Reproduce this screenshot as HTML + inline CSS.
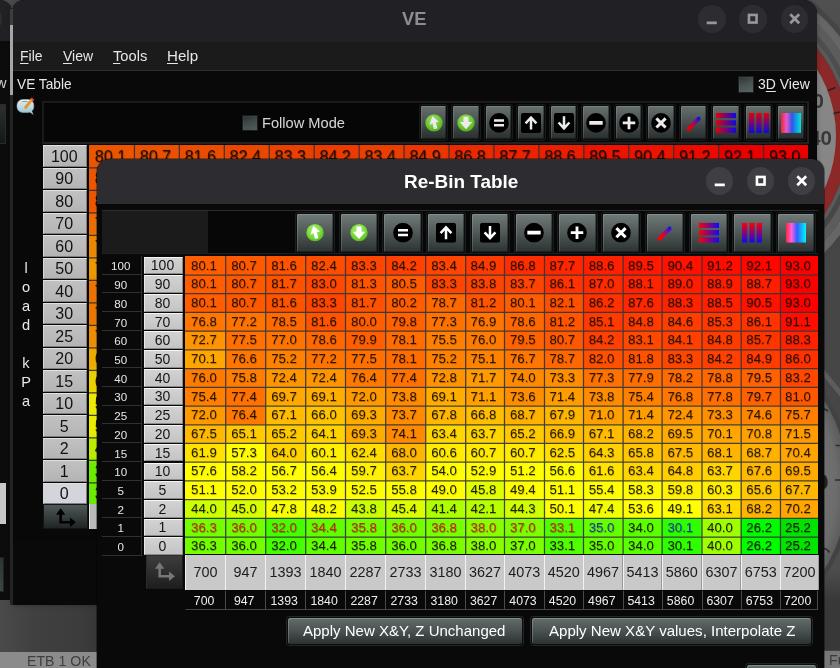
<!DOCTYPE html><html><head><meta charset="utf-8"><title>VE</title><style>
*{box-sizing:border-box;margin:0;padding:0}
html,body{width:840px;height:668px;overflow:hidden;background:#4a4a4a;font-family:"Liberation Sans","DejaVu Sans",sans-serif;}
body{position:relative}
div,span,svg{position:absolute}
u{text-decoration:underline;text-underline-offset:2.2px;text-decoration-thickness:1.1px}
.t{white-space:nowrap;transform-origin:0 0}
#ve{will-change:transform;top:0;height:604.5px;background:#090909;border-radius:12px 14px 0 0;overflow:hidden;box-shadow:0 0 5px 0 rgba(0,0,0,.28)}
#rb{will-change:transform;left:97px;top:159px;width:726.8px;height:521px;background:#090909;border-radius:13px 13px 0 0;overflow:hidden;box-shadow:0 0 0 1px rgba(0,0,0,.35)}
.tbar{left:0;top:0;width:100%;}
#ve .tbar{height:41.7px;background:#212125}
#rb .tbar{height:44.9px;background:#2c2c31}
.wb{width:27.5px;height:27.5px;border-radius:50%}
#ve .wb{top:5.2px;background:#2d2d31;color:#98989a}
.wb svg{left:0;top:0;width:27.5px;height:27.5px}
#rb .wb{top:8.4px;background:#3e3e43;color:#fff}
.menu{left:0;top:41.7px;width:100%;height:29.8px;background:#1b1b1c;border-bottom:1px solid #303030}
.lbl{font-size:14.6px;color:#e8e8e8;line-height:19px;white-space:nowrap}
.vl{width:14px;text-align:center}
.chk{width:16px;height:16.5px;background:linear-gradient(160deg,#2a3030 0%,#465050 45%,#5a6463 100%);border:1px solid #1c2020;box-shadow:inset 1px 1px 0 rgba(255,255,255,.06)}
.panel{background:#070707;border:2px solid #1d1d1d;border-right-color:#242424;border-bottom-color:#242424}
.panel2{background:#070707;border-top:1px solid #2c2c2c;border-bottom:1px solid #202020}
.panel2 .pl{left:0;top:0;width:106px;height:100%;background:#1b1b1b}
.tb{background:linear-gradient(180deg,#707a79 0%,#505958 48%,#2c3232 100%);border:1px solid #0c0e0e;border-radius:2px;box-shadow:inset 1px 1px 0 rgba(255,255,255,.15), inset -1px -1px 0 rgba(0,0,0,.35), 0 0 0 1px #1a1d1d}
.tb span{left:50%;top:50%;transform:translate(-50%,-51.5%)}
.tb.sm span{transform:translate(-50%,-45.5%)}
.tb svg{left:0;top:0;width:100%;height:100%}
.ybin{background:linear-gradient(180deg,#d2d2d2,#c4c4c4);color:#141414;text-align:center;font-size:14px;border-top:1.5px solid #f6f6f6;border-left:1px solid #eaeaea;border-bottom:1.5px solid #8a8a8a;border-right:1px solid #8a8a8a;display:flex;align-items:center;justify-content:center;padding-right:2px}
.ybin.big{font-size:16px;padding-top:2px;padding-right:1px}
.ybin.sel{background:#e6e6ee}
.ylab{color:#e6e6e6;font-size:11.6px;display:flex;align-items:center;justify-content:center;border-bottom:1px solid #303030;border-right:1px solid #303030;padding-top:2px;padding-right:1px}
.heat{overflow:hidden}
.cv{display:flex;align-items:center;justify-content:center;font-size:13.2px;color:rgba(24,14,4,.92);text-shadow:0.4px 0.6px 0.7px rgba(0,0,0,.3);padding-right:2.4px;padding-bottom:0.6px;white-space:nowrap}
.cv.big{font-size:16.1px;padding-top:1.6px;padding-right:1px;text-shadow:0.7px 0.9px 0.9px rgba(0,0,0,.5)}
.cv.red{color:#c8241a;text-shadow:0.6px 0.8px 0.8px rgba(80,40,0,.45)}
.cv.blue{color:#1c3c9c;text-shadow:0.6px 0.8px 0.8px rgba(0,40,80,.4)}
.xbin{background:#c9c9c9;color:#1c1c1c;font-size:14.4px;display:flex;align-items:center;justify-content:center;border-left:1.5px solid #f2f2f2;border-right:1px solid #9a9a9a;white-space:nowrap;overflow:hidden}
.xlab{color:#eee;font-size:12.3px;display:flex;align-items:center;justify-content:center;border-left:1px solid #4a4a4a;border-bottom:1px solid #444;white-space:nowrap;padding-top:2.4px;padding-right:3px}
.abtn{background:linear-gradient(180deg,#566160 0%,#3c4544 50%,#232828 100%);border:1px solid #151818;display:flex;align-items:center;justify-content:center}
.abtn svg{position:static}
.abtn.dis{background:linear-gradient(180deg,#3c3c3c 0%,#2e2e2e 50%,#1e1e1e 100%);border:1px solid #2c2c2c;border-bottom-color:#1a1a1a;border-right-color:#1a1a1a}
.btn{background:linear-gradient(180deg,#687271 0%,#5e6867 8%,#4a5352 48%,#2c3131 100%);border:1px solid #0c0e0e;border-radius:3px;box-shadow:inset 1px 1px 0 rgba(255,255,255,.2), 0 0 0 1px #222626}

.dim{left:0;top:101px;width:100%;height:440px;background:rgba(0,0,0,.08)}

</style></head><body>
<div id="bg" style="left:0;top:0;width:840px;height:668px;will-change:transform">
<svg style="left:800px;top:0" width="40" height="668" viewBox="800 0 40 668">
<defs><linearGradient id="rs" gradientUnits="userSpaceOnUse" x1="0" y1="0" x2="0" y2="668"><stop offset="0" stop-color="#505050"/><stop offset="0.34" stop-color="#464646"/><stop offset="0.6" stop-color="#464646"/><stop offset="0.85" stop-color="#4e4e4e"/><stop offset="0.9" stop-color="#383838"/><stop offset="1" stop-color="#383838"/></linearGradient>
<radialGradient id="lf" gradientUnits="userSpaceOnUse" cx="684" cy="485" r="164"><stop offset="0.8" stop-color="#747474"/><stop offset="0.93" stop-color="#6c6c6c"/><stop offset="1" stop-color="#5c5c5c"/></radialGradient></defs>
<rect x="800" y="0" width="40" height="668" fill="url(#rs)"/>
<circle cx="709" cy="136" r="167" fill="none" stroke="#454545" stroke-width="4.500"/>
<circle cx="709" cy="136" r="160" fill="none" stroke="#666" stroke-width="8"/><circle cx="709" cy="136" r="152" fill="none" stroke="#5c5c5c" stroke-width="8"/>
<path d="M822 371l20 24" stroke="#5c5c5c" stroke-width="5"/>
<circle cx="684" cy="485" r="168.500" fill="#424242"/>
<circle cx="684" cy="485" r="164" fill="url(#lf)"/>
<circle cx="709" cy="136" r="143" fill="#5a5a5a"/>
<circle cx="709" cy="136" r="139.500" fill="#444"/>
<circle cx="709" cy="136" r="139" fill="#8c2828"/>
<circle cx="709" cy="136" r="127" fill="#868686"/><path d="M828 90.500l7.500-3M833.500 113.500l6.500-1.500" stroke="#2a2020" stroke-width="1.600"/>
<text x="812.600" y="107.500" font-size="20.500" font-weight="bold" fill="#383838" font-family="Liberation Sans, sans-serif">0</text>
<text x="809.200" y="145.300" font-size="20.500" font-weight="bold" fill="#383838" font-family="Liberation Sans, sans-serif">40</text>
<path d="M835.500 445.500h4.500M835 480h5M823.500 408.500l4.500 2.500M824 548.500q3.500 0.500 5.500 4" stroke="#2c2c2c" stroke-width="1.700" fill="none"/>
<ellipse cx="823.700" cy="482" rx="4" ry="7.200" fill="#222"/>
<rect x="824" y="650.800" width="16" height="18" fill="#787878"/>
<text x="829" y="665.300" font-size="14.200" fill="#3a3a3a" font-family="Liberation Sans, sans-serif">Fu</text>
</svg>
<div style="left:-120px;top:0;width:131.5px;height:620px;background:#0c0c0c;border-radius:12px 12px 0 0;overflow:hidden"><div style="left:0;top:0;width:100%;height:41.3px;background:#212125"></div><div style="left:94px;top:5px;width:27.5px;height:27.5px;border-radius:50%;background:#2d2d31"></div></div>
<div class="t" style="left:-4px;top:74.6px;color:#d0d0d0;font-size:14.6px;line-height:17.5px">w</div>
<div style="left:-2px;top:103.5px;width:8px;height:40px;background:linear-gradient(180deg,#2a3030,#151818);border:1px solid #2a2a2a"></div>
<div style="left:0;top:483px;width:5.5px;height:41px;background:#c8c8c8"></div>
<div style="left:-2px;top:557px;width:5.5px;height:35px;background:linear-gradient(180deg,#2a3434,#3a4646);border:1px solid #222"></div>
<div style="left:0;top:600px;width:100px;height:52px;background:linear-gradient(90deg,#4a4a4a 0%,#404040 35%,#3c3c3c 80%,#363636 100%)"></div>
<div style="left:0;top:651.6px;width:100px;height:17px;background:#8b8b8b"></div>
</div>

<div class="t" style="left:26.56px;top:652.76px;font-size:14.2px;line-height:17.04px;color:#3e3e3e;transform:scaleX(0.9996);">ETB 1 OK</div>
<div id="ve" style="left:12px;width:804.6px">
<div class="tbar"></div>
<div class="wb" style="left:686.15px"><svg viewBox="0 0 27.5 27.5"><path d="M8.700 17.900H18.800" stroke="currentColor" stroke-width="2.800" fill="none"/></svg></div>
<div class="wb" style="left:727.35px"><svg viewBox="0 0 27.5 27.5"><rect x="9.950" y="9.950" width="7.600" height="7.600" stroke="currentColor" stroke-width="2.600" fill="none"/></svg></div>
<div class="wb" style="left:768.55px"><svg viewBox="0 0 27.5 27.5"><path d="M9.300 9.300L18.200 18.200M18.200 9.300L9.300 18.200" stroke="currentColor" stroke-width="2.700" fill="none"/></svg></div>
<div class="t" style="left:390.41px;top:8.00px;font-size:18.6px;line-height:22.32px;color:#8e8e90;font-weight:bold;transform:scaleX(0.9836);">VE</div>
<div class="menu"></div>
<div class="t" style="left:8.13px;top:48.23px;font-size:14.6px;line-height:17.52px;color:#e6e6e6;transform:scaleX(0.9571);"><u>F</u>ile</div>
<div class="t" style="left:50.93px;top:48.23px;font-size:14.6px;line-height:17.52px;color:#e6e6e6;transform:scaleX(0.9579);"><u>V</u>iew</div>
<div class="t" style="left:100.96px;top:48.23px;font-size:14.6px;line-height:17.52px;color:#e6e6e6;transform:scaleX(1.0064);"><u>T</u>ools</div>
<div class="t" style="left:155.04px;top:48.23px;font-size:14.6px;line-height:17.52px;color:#e6e6e6;transform:scaleX(1.0354);"><u>H</u>elp</div>
<div class="t" style="left:4.93px;top:75.88px;font-size:14.6px;line-height:17.52px;color:#e8e8e8;transform:scaleX(0.9399);">VE Table</div>
<div class="chk" style="left:725.5px;top:76.3px"></div>
<div class="t" style="left:746.19px;top:75.88px;font-size:14.6px;line-height:17.52px;color:#e8e8e8;transform:scaleX(0.9565);">3<u>D</u> View</div>
<svg style="left:3px;top:95.8px" width="22" height="22" viewBox="0 0 22 22"><defs><linearGradient id="nb" x1="0" y1="0" x2="0" y2="1"><stop offset="0" stop-color="#f2fafc"/><stop offset="0.55" stop-color="#d6eef6"/><stop offset="1" stop-color="#a8d6e6"/></linearGradient></defs><path d="M14.200 15.800L18.600 18.900L16.600 14.200Z" fill="#b4dcea"/><rect x="2" y="3.500" width="16.800" height="13" rx="5.800" ry="5.600" fill="url(#nb)" stroke="#9cc4d2" stroke-width=".5"/><path d="M7.200 5.400H12.600" stroke="#98a4a8" stroke-width="1"/><path d="M10 12.400L17.200 3.200" stroke="#f0a636" stroke-width="2.900"/><path d="M8.600 14.100L8.900 11.500L11.200 13.200Z" fill="#e8d2b0"/><path d="M16.600 1.400L19.400 3.700L18.200 5.200L15.400 2.900Z" fill="#e8384c"/></svg>

<div class="panel" style="left:30px;top:101px;width:766.6px;height:42.5px"></div>
<div class="chk" style="left:230px;top:114.7px"></div>
<div class="t" style="left:250.13px;top:114.88px;font-size:14.6px;line-height:17.52px;color:#e8e8e8;transform:scaleX(1.0030);">Follow Mode</div>
<div class="tb sm" style="left:407.9px;top:104.6px;width:27.3px;height:35.6px"><span style="width:20px;height:20px"><svg viewBox="0 0 24 24"><defs><radialGradient id="gg" cx="45%" cy="35%" r="65%"><stop offset="0" stop-color="#b4f080"/><stop offset="0.6" stop-color="#7cdc3c"/><stop offset="1" stop-color="#58bc22"/></radialGradient></defs><circle cx="12" cy="12" r="10.4" fill="url(#gg)"/><path d="M10 3.600L18 11L14 11.200L16.200 18.400L12 19.600L10.200 12.400L6.600 14.600Z" fill="#fff"/></svg></span></div><div class="tb sm" style="left:440.4px;top:104.6px;width:27.3px;height:35.6px"><span style="width:20px;height:20px"><svg viewBox="0 0 24 24"><circle cx="12" cy="12" r="10.4" fill="url(#gg)"/><path d="M9 4.500H15V11H19.500L12 19.500L4.500 11H9Z" fill="#fff"/></svg></span></div><div class="tb sm" style="left:472.9px;top:104.6px;width:27.3px;height:35.6px"><span style="width:20px;height:20px"><svg viewBox="0 0 24 24"><circle cx="12" cy="12" r="11.8" fill="#000"/><path d="M6 9.200H18M6 14.800H18" stroke="#fff" stroke-width="3"/></svg></span></div><div class="tb sm" style="left:505.4px;top:104.6px;width:27.3px;height:35.6px"><span style="width:20px;height:20px"><svg viewBox="0 0 24 24"><rect x="0" y="0" width="24" height="24" rx="3" fill="#000"/><path d="M12 20V5.500M5.500 12.500L12 5.500L18.500 12.500" stroke="#fff" stroke-width="3" fill="none"/></svg></span></div><div class="tb sm" style="left:537.9px;top:104.6px;width:27.3px;height:35.6px"><span style="width:20px;height:20px"><svg viewBox="0 0 24 24"><rect x="0" y="0" width="24" height="24" rx="3" fill="#000"/><path d="M12 4V18.500M5.500 11.500L12 18.500L18.500 11.500" stroke="#fff" stroke-width="3" fill="none"/></svg></span></div><div class="tb sm" style="left:570.4px;top:104.6px;width:27.3px;height:35.6px"><span style="width:20px;height:20px"><svg viewBox="0 0 24 24"><circle cx="12" cy="12" r="11.800" fill="#000"/><path d="M4 12H20" stroke="#fff" stroke-width="4.400"/></svg></span></div><div class="tb sm" style="left:602.9px;top:104.6px;width:27.3px;height:35.6px"><span style="width:20px;height:20px"><svg viewBox="0 0 24 24"><circle cx="12" cy="12" r="11.800" fill="#000"/><path d="M4.500 12H19.500M12 4.500V19.500" stroke="#fff" stroke-width="3.400"/></svg></span></div><div class="tb sm" style="left:635.4px;top:104.6px;width:27.3px;height:35.6px"><span style="width:20px;height:20px"><svg viewBox="0 0 24 24"><circle cx="12" cy="12" r="11.800" fill="#000"/><path d="M6.500 6.500L17.500 17.500M17.500 6.500L6.500 17.500" stroke="#fff" stroke-width="3.600"/></svg></span></div><div class="tb sm" style="left:667.9px;top:104.6px;width:27.3px;height:35.6px"><span style="width:20px;height:20px"><svg viewBox="0 0 24 24"><defs><linearGradient id="pg" gradientUnits="userSpaceOnUse" x1="5" y1="19" x2="19" y2="5"><stop offset="0" stop-color="#ff0000"/><stop offset="0.35" stop-color="#e00030"/><stop offset="0.6" stop-color="#8010a0"/><stop offset="1" stop-color="#0a10ff"/></linearGradient></defs><path d="M5.800 18.800L16.800 7.800" stroke="url(#pg)" stroke-width="4.800" stroke-linecap="square"/><path d="M15.600 5.600L19.600 4.600L18.600 8.600Z" fill="#1010f0"/></svg></span></div><div class="tb sm" style="left:700.4px;top:104.6px;width:27.3px;height:35.6px"><span style="width:20px;height:20px"><svg viewBox="0 0 24 24"><defs><linearGradient id="hg" gradientUnits="userSpaceOnUse" x1="0" y1="0" x2="24" y2="0"><stop offset="0" stop-color="#ff0000"/><stop offset="1" stop-color="#0a0aff"/></linearGradient></defs><rect x="0" y="0" width="24" height="6.300" fill="url(#hg)"/><rect x="0" y="8.850" width="24" height="6.300" fill="url(#hg)"/><rect x="0" y="17.700" width="24" height="6.300" fill="url(#hg)"/></svg></span></div><div class="tb sm" style="left:732.9px;top:104.6px;width:27.3px;height:35.6px"><span style="width:20px;height:20px"><svg viewBox="0 0 24 24"><defs><linearGradient id="vg" gradientUnits="userSpaceOnUse" x1="0" y1="0" x2="0" y2="24"><stop offset="0" stop-color="#ff0000"/><stop offset="1" stop-color="#0a0aff"/></linearGradient></defs><rect x="0" y="0" width="6.300" height="24" fill="url(#vg)"/><rect x="8.850" y="0" width="6.300" height="24" fill="url(#vg)"/><rect x="17.700" y="0" width="6.300" height="24" fill="url(#vg)"/></svg></span></div><div class="tb sm" style="left:765.4px;top:104.6px;width:27.3px;height:35.6px"><span style="width:20px;height:20px"><svg viewBox="0 0 24 24"><defs><linearGradient id="cg" x1="0" y1="0" x2="1" y2="0"><stop offset="0" stop-color="#ff2a3a"/><stop offset="0.28" stop-color="#ff60e0"/><stop offset="0.55" stop-color="#3060ff"/><stop offset="1" stop-color="#00f8f0"/></linearGradient></defs><rect x="0" y="0" width="24" height="24" fill="url(#cg)"/></svg></span></div>
<div class="ybin big" style="left:30.75px;top:145.30px;width:44px;height:21.30px">100</div>
<div class="ybin big" style="left:30.75px;top:167.80px;width:44px;height:21.30px">90</div>
<div class="ybin big" style="left:30.75px;top:190.30px;width:44px;height:21.30px">80</div>
<div class="ybin big" style="left:30.75px;top:212.80px;width:44px;height:21.30px">70</div>
<div class="ybin big" style="left:30.75px;top:235.30px;width:44px;height:21.30px">60</div>
<div class="ybin big" style="left:30.75px;top:257.80px;width:44px;height:21.30px">50</div>
<div class="ybin big" style="left:30.75px;top:280.30px;width:44px;height:21.30px">40</div>
<div class="ybin big" style="left:30.75px;top:302.80px;width:44px;height:21.30px">30</div>
<div class="ybin big" style="left:30.75px;top:325.30px;width:44px;height:21.30px">25</div>
<div class="ybin big" style="left:30.75px;top:347.80px;width:44px;height:21.30px">20</div>
<div class="ybin big" style="left:30.75px;top:370.30px;width:44px;height:21.30px">15</div>
<div class="ybin big" style="left:30.75px;top:392.80px;width:44px;height:21.30px">10</div>
<div class="ybin big" style="left:30.75px;top:415.30px;width:44px;height:21.30px">5</div>
<div class="ybin big" style="left:30.75px;top:437.80px;width:44px;height:21.30px">2</div>
<div class="ybin big" style="left:30.75px;top:460.30px;width:44px;height:21.30px">1</div>
<div class="ybin big sel" style="left:30.75px;top:482.80px;width:44px;height:21.30px">0</div>
<svg class="heat" style="left:76.50px;top:144.50px" width="719.04" height="360.00" viewBox="0 0 719.04 360.00"><defs><filter id="vb" x="-5%" y="-5%" width="110%" height="110%"><feGaussianBlur stdDeviation="2.2"/></filter></defs><g filter="url(#vb)"><rect x="-10.00" y="-10.00" width="55.44" height="33.00" fill="#ff5d00"/><rect x="44.94" y="-10.00" width="45.44" height="33.00" fill="#ff5900"/><rect x="89.88" y="-10.00" width="45.44" height="33.00" fill="#ff5300"/><rect x="134.82" y="-10.00" width="45.44" height="33.00" fill="#ff4d00"/><rect x="179.76" y="-10.00" width="45.44" height="33.00" fill="#ff4600"/><rect x="224.70" y="-10.00" width="45.44" height="33.00" fill="#ff4000"/><rect x="269.64" y="-10.00" width="45.44" height="33.00" fill="#ff4500"/><rect x="314.58" y="-10.00" width="45.44" height="33.00" fill="#ff3b00"/><rect x="359.52" y="-10.00" width="45.44" height="33.00" fill="#ff2d00"/><rect x="404.46" y="-10.00" width="45.44" height="33.00" fill="#ff2600"/><rect x="449.40" y="-10.00" width="45.44" height="33.00" fill="#ff2000"/><rect x="494.34" y="-10.00" width="45.44" height="33.00" fill="#ff1900"/><rect x="539.28" y="-10.00" width="45.44" height="33.00" fill="#ff1200"/><rect x="584.22" y="-10.00" width="45.44" height="33.00" fill="#ff0d00"/><rect x="629.16" y="-10.00" width="45.44" height="33.00" fill="#ff0600"/><rect x="674.10" y="-10.00" width="55.44" height="33.00" fill="#ff0000"/><rect x="-10.00" y="22.50" width="55.44" height="23.00" fill="#ff5d00"/><rect x="44.94" y="22.50" width="45.44" height="23.00" fill="#ff5900"/><rect x="89.88" y="22.50" width="45.44" height="23.00" fill="#ff5200"/><rect x="134.82" y="22.50" width="45.44" height="23.00" fill="#ff4800"/><rect x="179.76" y="22.50" width="45.44" height="23.00" fill="#ff5500"/><rect x="224.70" y="22.50" width="45.44" height="23.00" fill="#ff5b00"/><rect x="269.64" y="22.50" width="45.44" height="23.00" fill="#ff4600"/><rect x="314.58" y="22.50" width="45.44" height="23.00" fill="#ff4300"/><rect x="359.52" y="22.50" width="45.44" height="23.00" fill="#ff4300"/><rect x="404.46" y="22.50" width="45.44" height="23.00" fill="#ff3200"/><rect x="449.40" y="22.50" width="45.44" height="23.00" fill="#ff2b00"/><rect x="494.34" y="22.50" width="45.44" height="23.00" fill="#ff2300"/><rect x="539.28" y="22.50" width="45.44" height="23.00" fill="#ff1d00"/><rect x="584.22" y="22.50" width="45.44" height="23.00" fill="#ff1d00"/><rect x="629.16" y="22.50" width="45.44" height="23.00" fill="#ff1f00"/><rect x="674.10" y="22.50" width="55.44" height="23.00" fill="#ff0000"/><rect x="-10.00" y="45.00" width="55.44" height="23.00" fill="#ff5d00"/><rect x="44.94" y="45.00" width="45.44" height="23.00" fill="#ff5900"/><rect x="89.88" y="45.00" width="45.44" height="23.00" fill="#ff5300"/><rect x="134.82" y="45.00" width="45.44" height="23.00" fill="#ff4600"/><rect x="179.76" y="45.00" width="45.44" height="23.00" fill="#ff5200"/><rect x="224.70" y="45.00" width="45.44" height="23.00" fill="#ff5d00"/><rect x="269.64" y="45.00" width="45.44" height="23.00" fill="#ff6800"/><rect x="314.58" y="45.00" width="45.44" height="23.00" fill="#ff5500"/><rect x="359.52" y="45.00" width="45.44" height="23.00" fill="#ff5d00"/><rect x="404.46" y="45.00" width="45.44" height="23.00" fill="#ff4f00"/><rect x="449.40" y="45.00" width="45.44" height="23.00" fill="#ff3100"/><rect x="494.34" y="45.00" width="45.44" height="23.00" fill="#ff2700"/><rect x="539.28" y="45.00" width="45.44" height="23.00" fill="#ff2200"/><rect x="584.22" y="45.00" width="45.44" height="23.00" fill="#ff2000"/><rect x="629.16" y="45.00" width="45.44" height="23.00" fill="#ff1200"/><rect x="674.10" y="45.00" width="55.44" height="23.00" fill="#ff0000"/><rect x="-10.00" y="67.50" width="55.44" height="23.00" fill="#ff7600"/><rect x="44.94" y="67.50" width="45.44" height="23.00" fill="#ff7300"/><rect x="89.88" y="67.50" width="45.44" height="23.00" fill="#ff6900"/><rect x="134.82" y="67.50" width="45.44" height="23.00" fill="#ff5300"/><rect x="179.76" y="67.50" width="45.44" height="23.00" fill="#ff5e00"/><rect x="224.70" y="67.50" width="45.44" height="23.00" fill="#ff6000"/><rect x="269.64" y="67.50" width="45.44" height="23.00" fill="#ff7200"/><rect x="314.58" y="67.50" width="45.44" height="23.00" fill="#ff7500"/><rect x="359.52" y="67.50" width="45.44" height="23.00" fill="#ff6800"/><rect x="404.46" y="67.50" width="45.44" height="23.00" fill="#ff5500"/><rect x="449.40" y="67.50" width="45.44" height="23.00" fill="#ff3900"/><rect x="494.34" y="67.50" width="45.44" height="23.00" fill="#ff3b00"/><rect x="539.28" y="67.50" width="45.44" height="23.00" fill="#ff3d00"/><rect x="584.22" y="67.50" width="45.44" height="23.00" fill="#ff3800"/><rect x="629.16" y="67.50" width="45.44" height="23.00" fill="#ff3200"/><rect x="674.10" y="67.50" width="55.44" height="23.00" fill="#ff0d00"/><rect x="-10.00" y="90.00" width="55.44" height="23.00" fill="#ff9300"/><rect x="44.94" y="90.00" width="45.44" height="23.00" fill="#ff7000"/><rect x="89.88" y="90.00" width="45.44" height="23.00" fill="#ff7400"/><rect x="134.82" y="90.00" width="45.44" height="23.00" fill="#ff6800"/><rect x="179.76" y="90.00" width="45.44" height="23.00" fill="#ff5f00"/><rect x="224.70" y="90.00" width="45.44" height="23.00" fill="#ff6c00"/><rect x="269.64" y="90.00" width="45.44" height="23.00" fill="#ff7f00"/><rect x="314.58" y="90.00" width="45.44" height="23.00" fill="#ff7b00"/><rect x="359.52" y="90.00" width="45.44" height="23.00" fill="#ff6200"/><rect x="404.46" y="90.00" width="45.44" height="23.00" fill="#ff5900"/><rect x="449.40" y="90.00" width="45.44" height="23.00" fill="#ff4000"/><rect x="494.34" y="90.00" width="45.44" height="23.00" fill="#ff4800"/><rect x="539.28" y="90.00" width="45.44" height="23.00" fill="#ff4000"/><rect x="584.22" y="90.00" width="45.44" height="23.00" fill="#ff3b00"/><rect x="629.16" y="90.00" width="45.44" height="23.00" fill="#ff3500"/><rect x="674.10" y="90.00" width="55.44" height="23.00" fill="#ff2200"/><rect x="-10.00" y="112.50" width="55.44" height="23.00" fill="#ffa600"/><rect x="44.94" y="112.50" width="45.44" height="23.00" fill="#ff7700"/><rect x="89.88" y="112.50" width="45.44" height="23.00" fill="#ff8100"/><rect x="134.82" y="112.50" width="45.44" height="23.00" fill="#ff7300"/><rect x="179.76" y="112.50" width="45.44" height="23.00" fill="#ff7000"/><rect x="224.70" y="112.50" width="45.44" height="23.00" fill="#ff6c00"/><rect x="269.64" y="112.50" width="45.44" height="23.00" fill="#ff8100"/><rect x="314.58" y="112.50" width="45.44" height="23.00" fill="#ff8200"/><rect x="359.52" y="112.50" width="45.44" height="23.00" fill="#ff7600"/><rect x="404.46" y="112.50" width="45.44" height="23.00" fill="#ff6800"/><rect x="449.40" y="112.50" width="45.44" height="23.00" fill="#ff5000"/><rect x="494.34" y="112.50" width="45.44" height="23.00" fill="#ff5100"/><rect x="539.28" y="112.50" width="45.44" height="23.00" fill="#ff4600"/><rect x="584.22" y="112.50" width="45.44" height="23.00" fill="#ff4000"/><rect x="629.16" y="112.50" width="45.44" height="23.00" fill="#ff3b00"/><rect x="674.10" y="112.50" width="55.44" height="23.00" fill="#ff3200"/><rect x="-10.00" y="135.00" width="55.44" height="23.00" fill="#ff7b00"/><rect x="44.94" y="135.00" width="45.44" height="23.00" fill="#ff7d00"/><rect x="89.88" y="135.00" width="45.44" height="23.00" fill="#ff9600"/><rect x="134.82" y="135.00" width="45.44" height="23.00" fill="#ff9600"/><rect x="179.76" y="135.00" width="45.44" height="23.00" fill="#ff7800"/><rect x="224.70" y="135.00" width="45.44" height="23.00" fill="#ff7100"/><rect x="269.64" y="135.00" width="45.44" height="23.00" fill="#ff9300"/><rect x="314.58" y="135.00" width="45.44" height="23.00" fill="#ff9b00"/><rect x="359.52" y="135.00" width="45.44" height="23.00" fill="#ff8a00"/><rect x="404.46" y="135.00" width="45.44" height="23.00" fill="#ff8f00"/><rect x="449.40" y="135.00" width="45.44" height="23.00" fill="#ff7200"/><rect x="494.34" y="135.00" width="45.44" height="23.00" fill="#ff6e00"/><rect x="539.28" y="135.00" width="45.44" height="23.00" fill="#ff6b00"/><rect x="584.22" y="135.00" width="45.44" height="23.00" fill="#ff6700"/><rect x="629.16" y="135.00" width="45.44" height="23.00" fill="#ff6200"/><rect x="674.10" y="135.00" width="55.44" height="23.00" fill="#ff4700"/><rect x="-10.00" y="157.50" width="55.44" height="23.00" fill="#ff8000"/><rect x="44.94" y="157.50" width="45.44" height="23.00" fill="#ff7100"/><rect x="89.88" y="157.50" width="45.44" height="23.00" fill="#ffa900"/><rect x="134.82" y="157.50" width="45.44" height="23.00" fill="#ffae00"/><rect x="179.76" y="157.50" width="45.44" height="23.00" fill="#ff9900"/><rect x="224.70" y="157.50" width="45.44" height="23.00" fill="#ff8b00"/><rect x="269.64" y="157.50" width="45.44" height="23.00" fill="#ffae00"/><rect x="314.58" y="157.50" width="45.44" height="23.00" fill="#ff9f00"/><rect x="359.52" y="157.50" width="45.44" height="23.00" fill="#ff8d00"/><rect x="404.46" y="157.50" width="45.44" height="23.00" fill="#ff9d00"/><rect x="449.40" y="157.50" width="45.44" height="23.00" fill="#ff8b00"/><rect x="494.34" y="157.50" width="45.44" height="23.00" fill="#ff8000"/><rect x="539.28" y="157.50" width="45.44" height="23.00" fill="#ff7600"/><rect x="584.22" y="157.50" width="45.44" height="23.00" fill="#ff6e00"/><rect x="629.16" y="157.50" width="45.44" height="23.00" fill="#ff6000"/><rect x="674.10" y="157.50" width="55.44" height="23.00" fill="#ff5700"/><rect x="-10.00" y="180.00" width="55.44" height="23.00" fill="#ff9900"/><rect x="44.94" y="180.00" width="45.44" height="23.00" fill="#ff7800"/><rect x="89.88" y="180.00" width="45.44" height="23.00" fill="#ffbc00"/><rect x="134.82" y="180.00" width="45.44" height="23.00" fill="#ffc400"/><rect x="179.76" y="180.00" width="45.44" height="23.00" fill="#ffac00"/><rect x="224.70" y="180.00" width="45.44" height="23.00" fill="#ff8c00"/><rect x="269.64" y="180.00" width="45.44" height="23.00" fill="#ffb700"/><rect x="314.58" y="180.00" width="45.44" height="23.00" fill="#ffbe00"/><rect x="359.52" y="180.00" width="45.44" height="23.00" fill="#ffb100"/><rect x="404.46" y="180.00" width="45.44" height="23.00" fill="#ffb600"/><rect x="449.40" y="180.00" width="45.44" height="23.00" fill="#ffa000"/><rect x="494.34" y="180.00" width="45.44" height="23.00" fill="#ff9d00"/><rect x="539.28" y="180.00" width="45.44" height="23.00" fill="#ff9600"/><rect x="584.22" y="180.00" width="45.44" height="23.00" fill="#ff8f00"/><rect x="629.16" y="180.00" width="45.44" height="23.00" fill="#ff8600"/><rect x="674.10" y="180.00" width="55.44" height="23.00" fill="#ff7e00"/><rect x="-10.00" y="202.50" width="55.44" height="23.00" fill="#ffb900"/><rect x="44.94" y="202.50" width="45.44" height="23.00" fill="#ffcb00"/><rect x="89.88" y="202.50" width="45.44" height="23.00" fill="#ffca00"/><rect x="134.82" y="202.50" width="45.44" height="23.00" fill="#ffd200"/><rect x="179.76" y="202.50" width="45.44" height="23.00" fill="#ffac00"/><rect x="224.70" y="202.50" width="45.44" height="23.00" fill="#ff8900"/><rect x="269.64" y="202.50" width="45.44" height="23.00" fill="#ffd700"/><rect x="314.58" y="202.50" width="45.44" height="23.00" fill="#ffd500"/><rect x="359.52" y="202.50" width="45.44" height="23.00" fill="#ffca00"/><rect x="404.46" y="202.50" width="45.44" height="23.00" fill="#ffbe00"/><rect x="449.40" y="202.50" width="45.44" height="23.00" fill="#ffbc00"/><rect x="494.34" y="202.50" width="45.44" height="23.00" fill="#ffb400"/><rect x="539.28" y="202.50" width="45.44" height="23.00" fill="#ffab00"/><rect x="584.22" y="202.50" width="45.44" height="23.00" fill="#ffa600"/><rect x="629.16" y="202.50" width="45.44" height="23.00" fill="#ffa100"/><rect x="674.10" y="202.50" width="55.44" height="23.00" fill="#ff9c00"/><rect x="-10.00" y="225.00" width="55.44" height="23.00" fill="#ffe200"/><rect x="44.94" y="225.00" width="45.44" height="23.00" fill="#ffff00"/><rect x="89.88" y="225.00" width="45.44" height="23.00" fill="#ffd300"/><rect x="134.82" y="225.00" width="45.44" height="23.00" fill="#ffef00"/><rect x="179.76" y="225.00" width="45.44" height="23.00" fill="#ffde00"/><rect x="224.70" y="225.00" width="45.44" height="23.00" fill="#ffb600"/><rect x="269.64" y="225.00" width="45.44" height="23.00" fill="#ffec00"/><rect x="314.58" y="225.00" width="45.44" height="23.00" fill="#ffeb00"/><rect x="359.52" y="225.00" width="45.44" height="23.00" fill="#ffeb00"/><rect x="404.46" y="225.00" width="45.44" height="23.00" fill="#ffde00"/><rect x="449.40" y="225.00" width="45.44" height="23.00" fill="#ffd100"/><rect x="494.34" y="225.00" width="45.44" height="23.00" fill="#ffc600"/><rect x="539.28" y="225.00" width="45.44" height="23.00" fill="#ffb900"/><rect x="584.22" y="225.00" width="45.44" height="23.00" fill="#ffb500"/><rect x="629.16" y="225.00" width="45.44" height="23.00" fill="#ffb100"/><rect x="674.10" y="225.00" width="55.44" height="23.00" fill="#ffa400"/><rect x="-10.00" y="247.50" width="55.44" height="23.00" fill="#ffff00"/><rect x="44.94" y="247.50" width="45.44" height="23.00" fill="#fffd00"/><rect x="89.88" y="247.50" width="45.44" height="23.00" fill="#ffff00"/><rect x="134.82" y="247.50" width="45.44" height="23.00" fill="#ffff00"/><rect x="179.76" y="247.50" width="45.44" height="23.00" fill="#fff200"/><rect x="224.70" y="247.50" width="45.44" height="23.00" fill="#ffd500"/><rect x="269.64" y="247.50" width="45.44" height="23.00" fill="#ffff00"/><rect x="314.58" y="247.50" width="45.44" height="23.00" fill="#ffff00"/><rect x="359.52" y="247.50" width="45.44" height="23.00" fill="#ffff00"/><rect x="404.46" y="247.50" width="45.44" height="23.00" fill="#ffff00"/><rect x="449.40" y="247.50" width="45.44" height="23.00" fill="#ffe400"/><rect x="494.34" y="247.50" width="45.44" height="23.00" fill="#ffd700"/><rect x="539.28" y="247.50" width="45.44" height="23.00" fill="#ffcd00"/><rect x="584.22" y="247.50" width="45.44" height="23.00" fill="#ffd500"/><rect x="629.16" y="247.50" width="45.44" height="23.00" fill="#ffb900"/><rect x="674.10" y="247.50" width="55.44" height="23.00" fill="#ffab00"/><rect x="-10.00" y="270.00" width="55.44" height="23.00" fill="#ffff00"/><rect x="44.94" y="270.00" width="45.44" height="23.00" fill="#ffff00"/><rect x="89.88" y="270.00" width="45.44" height="23.00" fill="#ffff00"/><rect x="134.82" y="270.00" width="45.44" height="23.00" fill="#ffff00"/><rect x="179.76" y="270.00" width="45.44" height="23.00" fill="#ffff00"/><rect x="224.70" y="270.00" width="45.44" height="23.00" fill="#ffff00"/><rect x="269.64" y="270.00" width="45.44" height="23.00" fill="#ffff00"/><rect x="314.58" y="270.00" width="45.44" height="23.00" fill="#e0ff00"/><rect x="359.52" y="270.00" width="45.44" height="23.00" fill="#ffff00"/><rect x="404.46" y="270.00" width="45.44" height="23.00" fill="#ffff00"/><rect x="449.40" y="270.00" width="45.44" height="23.00" fill="#ffff00"/><rect x="494.34" y="270.00" width="45.44" height="23.00" fill="#fffc00"/><rect x="539.28" y="270.00" width="45.44" height="23.00" fill="#fff100"/><rect x="584.22" y="270.00" width="45.44" height="23.00" fill="#ffee00"/><rect x="629.16" y="270.00" width="45.44" height="23.00" fill="#ffc700"/><rect x="674.10" y="270.00" width="55.44" height="23.00" fill="#ffb800"/><rect x="-10.00" y="292.50" width="55.44" height="23.00" fill="#ccff00"/><rect x="44.94" y="292.50" width="45.44" height="23.00" fill="#d7ff00"/><rect x="89.88" y="292.50" width="45.44" height="23.00" fill="#f7ff00"/><rect x="134.82" y="292.50" width="45.44" height="23.00" fill="#fbff00"/><rect x="179.76" y="292.50" width="45.44" height="23.00" fill="#c9ff00"/><rect x="224.70" y="292.50" width="45.44" height="23.00" fill="#dbff00"/><rect x="269.64" y="292.50" width="45.44" height="23.00" fill="#aeff00"/><rect x="314.58" y="292.50" width="45.44" height="23.00" fill="#b6ff00"/><rect x="359.52" y="292.50" width="45.44" height="23.00" fill="#cfff00"/><rect x="404.46" y="292.50" width="45.44" height="23.00" fill="#ffff00"/><rect x="449.40" y="292.50" width="45.44" height="23.00" fill="#f2ff00"/><rect x="494.34" y="292.50" width="45.44" height="23.00" fill="#ffff00"/><rect x="539.28" y="292.50" width="45.44" height="23.00" fill="#ffff00"/><rect x="584.22" y="292.50" width="45.44" height="23.00" fill="#ffd900"/><rect x="629.16" y="292.50" width="45.44" height="23.00" fill="#ffb400"/><rect x="674.10" y="292.50" width="55.44" height="23.00" fill="#ffa600"/><rect x="-10.00" y="315.00" width="55.44" height="23.00" fill="#74ff00"/><rect x="44.94" y="315.00" width="45.44" height="23.00" fill="#71ff00"/><rect x="89.88" y="315.00" width="45.44" height="23.00" fill="#44ff00"/><rect x="134.82" y="315.00" width="45.44" height="23.00" fill="#5fff00"/><rect x="179.76" y="315.00" width="45.44" height="23.00" fill="#6fff00"/><rect x="224.70" y="315.00" width="45.44" height="23.00" fill="#71ff00"/><rect x="269.64" y="315.00" width="45.44" height="23.00" fill="#7aff00"/><rect x="314.58" y="315.00" width="45.44" height="23.00" fill="#88ff00"/><rect x="359.52" y="315.00" width="45.44" height="23.00" fill="#7cff00"/><rect x="404.46" y="315.00" width="45.44" height="23.00" fill="#50ff00"/><rect x="449.40" y="315.00" width="45.44" height="23.00" fill="#66ff00"/><rect x="494.34" y="315.00" width="45.44" height="23.00" fill="#5aff00"/><rect x="539.28" y="315.00" width="45.44" height="23.00" fill="#2eff00"/><rect x="584.22" y="315.00" width="45.44" height="23.00" fill="#9eff00"/><rect x="629.16" y="315.00" width="45.44" height="23.00" fill="#02fc00"/><rect x="674.10" y="315.00" width="55.44" height="23.00" fill="#00e400"/><rect x="-10.00" y="337.50" width="55.44" height="33.00" fill="#74ff00"/><rect x="44.94" y="337.50" width="45.44" height="33.00" fill="#71ff00"/><rect x="89.88" y="337.50" width="45.44" height="33.00" fill="#44ff00"/><rect x="134.82" y="337.50" width="45.44" height="33.00" fill="#5fff00"/><rect x="179.76" y="337.50" width="45.44" height="33.00" fill="#6fff00"/><rect x="224.70" y="337.50" width="45.44" height="33.00" fill="#71ff00"/><rect x="269.64" y="337.50" width="45.44" height="33.00" fill="#7aff00"/><rect x="314.58" y="337.50" width="45.44" height="33.00" fill="#88ff00"/><rect x="359.52" y="337.50" width="45.44" height="33.00" fill="#7cff00"/><rect x="404.46" y="337.50" width="45.44" height="33.00" fill="#50ff00"/><rect x="449.40" y="337.50" width="45.44" height="33.00" fill="#66ff00"/><rect x="494.34" y="337.50" width="45.44" height="33.00" fill="#5aff00"/><rect x="539.28" y="337.50" width="45.44" height="33.00" fill="#2eff00"/><rect x="584.22" y="337.50" width="45.44" height="33.00" fill="#9eff00"/><rect x="629.16" y="337.50" width="45.44" height="33.00" fill="#02fc00"/><rect x="674.10" y="337.50" width="55.44" height="33.00" fill="#00e400"/></g><path d="M45.44 0V360.00M90.38 0V360.00M135.32 0V360.00M180.26 0V360.00M225.20 0V360.00M270.14 0V360.00M315.08 0V360.00M360.02 0V360.00M404.96 0V360.00M449.90 0V360.00M494.84 0V360.00M539.78 0V360.00M584.72 0V360.00M629.66 0V360.00M674.60 0V360.00M0 22.80H719.04M0 45.30H719.04M0 67.80H719.04M0 90.30H719.04M0 112.80H719.04M0 135.30H719.04M0 157.80H719.04M0 180.30H719.04M0 202.80H719.04M0 225.30H719.04M0 247.80H719.04M0 270.30H719.04M0 292.80H719.04M0 315.30H719.04M0 337.80H719.04" stroke="rgba(54,54,58,0.93)" stroke-width="1.25" fill="none"/></svg>
<div class="cv big" style="left:76.50px;top:144.50px;width:44.94px;height:22.50px">80.1</div>
<div class="cv big" style="left:121.44px;top:144.50px;width:44.94px;height:22.50px">80.7</div>
<div class="cv big" style="left:166.38px;top:144.50px;width:44.94px;height:22.50px">81.6</div>
<div class="cv big" style="left:211.32px;top:144.50px;width:44.94px;height:22.50px">82.4</div>
<div class="cv big" style="left:256.26px;top:144.50px;width:44.94px;height:22.50px">83.3</div>
<div class="cv big" style="left:301.20px;top:144.50px;width:44.94px;height:22.50px">84.2</div>
<div class="cv big" style="left:346.14px;top:144.50px;width:44.94px;height:22.50px">83.4</div>
<div class="cv big" style="left:391.08px;top:144.50px;width:44.94px;height:22.50px">84.9</div>
<div class="cv big" style="left:436.02px;top:144.50px;width:44.94px;height:22.50px">86.8</div>
<div class="cv big" style="left:480.96px;top:144.50px;width:44.94px;height:22.50px">87.7</div>
<div class="cv big" style="left:525.90px;top:144.50px;width:44.94px;height:22.50px">88.6</div>
<div class="cv big" style="left:570.84px;top:144.50px;width:44.94px;height:22.50px">89.5</div>
<div class="cv big" style="left:615.78px;top:144.50px;width:44.94px;height:22.50px">90.4</div>
<div class="cv big" style="left:660.72px;top:144.50px;width:44.94px;height:22.50px">91.2</div>
<div class="cv big" style="left:705.66px;top:144.50px;width:44.94px;height:22.50px">92.1</div>
<div class="cv big" style="left:750.60px;top:144.50px;width:44.94px;height:22.50px">93.0</div>
<div class="cv big" style="left:76.50px;top:167.00px;width:44.94px;height:22.50px">80.1</div>
<div class="cv big" style="left:76.50px;top:189.50px;width:44.94px;height:22.50px">80.1</div>
<div class="cv big" style="left:76.50px;top:212.00px;width:44.94px;height:22.50px">76.8</div>
<div class="cv big" style="left:76.50px;top:234.50px;width:44.94px;height:22.50px">72.7</div>
<div class="cv big" style="left:76.50px;top:257.00px;width:44.94px;height:22.50px">70.1</div>
<div class="cv big" style="left:76.50px;top:279.50px;width:44.94px;height:22.50px">76.0</div>
<div class="cv big" style="left:76.50px;top:302.00px;width:44.94px;height:22.50px">75.4</div>
<div class="cv big" style="left:76.50px;top:324.50px;width:44.94px;height:22.50px">72.0</div>
<div class="cv big" style="left:76.50px;top:347.00px;width:44.94px;height:22.50px">67.5</div>
<div class="cv big" style="left:76.50px;top:369.50px;width:44.94px;height:22.50px">61.9</div>
<div class="cv big" style="left:76.50px;top:392.00px;width:44.94px;height:22.50px">57.6</div>
<div class="cv big" style="left:76.50px;top:414.50px;width:44.94px;height:22.50px">51.1</div>
<div class="cv big" style="left:76.50px;top:437.00px;width:44.94px;height:22.50px">44.0</div>
<div class="cv big" style="left:76.50px;top:459.50px;width:44.94px;height:22.50px">36.3</div>
<div class="cv big" style="left:76.50px;top:482.00px;width:44.94px;height:22.50px">36.3</div>
<div class="abtn" style="left:31.299999999999997px;top:504.3px;width:44.5px;height:24.8px"><svg viewBox="0 0 30 24" width="25.5" height="20.4"><path d="M9 6V18H24" stroke="#000" stroke-width="3" fill="none"/><path d="M3.5 9L9 1.5L14.5 9Z M20 12.5L27 18L20 23.5Z" fill="#000"/></svg></div>
<div class="xbin" style="left:77px;top:504.3px;width:20px;height:24.8px"></div>
<div class="dim"></div>
<div class="lbl vl" style="left:7px;top:259.2px">l</div>
<div class="lbl vl" style="left:7px;top:278.1px">o</div>
<div class="lbl vl" style="left:7px;top:297.0px">a</div>
<div class="lbl vl" style="left:7px;top:315.9px">d</div>
<div class="lbl vl" style="left:7px;top:353.7px">k</div>
<div class="lbl vl" style="left:7px;top:372.6px">P</div>
<div class="lbl vl" style="left:7px;top:391.5px">a</div>
</div>
<div style="left:10.2px;top:9px;width:2.8px;height:16px;background:#3c3c3c"></div>
<div style="left:10.1px;top:25px;width:3px;height:70px;background:#a6a6a6"></div>
<div style="left:10.2px;top:95px;width:2.8px;height:510px;background:#242424"></div>

<div id="rb">
<div class="tbar"></div>
<div class="wb" style="left:608.75px"><svg viewBox="0 0 27.5 27.5"><path d="M8.700 17.900H18.800" stroke="currentColor" stroke-width="2.800" fill="none"/></svg></div>
<div class="wb" style="left:649.85px"><svg viewBox="0 0 27.5 27.5"><rect x="9.950" y="9.950" width="7.600" height="7.600" stroke="currentColor" stroke-width="2.600" fill="none"/></svg></div>
<div class="wb" style="left:690.95px"><svg viewBox="0 0 27.5 27.5"><path d="M9.300 9.300L18.200 18.200M18.200 9.300L9.300 18.200" stroke="currentColor" stroke-width="2.700" fill="none"/></svg></div>
<div class="t" style="left:306.67px;top:11.89px;font-size:18.5px;line-height:22.20px;color:#ffffff;font-weight:bold;transform:scaleX(1.0228);">Re-Bin Table</div>
<div class="panel2" style="left:5px;top:51px;width:716.3px;height:43.5px"><div class="pl"></div></div>
<div class="tb lg" style="left:198.9px;top:54.30000000000001px;width:38.3px;height:39.8px"><span style="width:20px;height:20px"><svg viewBox="0 0 24 24"><defs><radialGradient id="gg" cx="45%" cy="35%" r="65%"><stop offset="0" stop-color="#b4f080"/><stop offset="0.6" stop-color="#7cdc3c"/><stop offset="1" stop-color="#58bc22"/></radialGradient></defs><circle cx="12" cy="12" r="10.4" fill="url(#gg)"/><path d="M10 3.600L18 11L14 11.200L16.200 18.400L12 19.600L10.200 12.400L6.600 14.600Z" fill="#fff"/></svg></span></div><div class="tb lg" style="left:242.6px;top:54.30000000000001px;width:38.3px;height:39.8px"><span style="width:20px;height:20px"><svg viewBox="0 0 24 24"><circle cx="12" cy="12" r="10.4" fill="url(#gg)"/><path d="M9 4.500H15V11H19.500L12 19.500L4.500 11H9Z" fill="#fff"/></svg></span></div><div class="tb lg" style="left:286.4px;top:54.30000000000001px;width:38.3px;height:39.8px"><span style="width:20px;height:20px"><svg viewBox="0 0 24 24"><circle cx="12" cy="12" r="11.8" fill="#000"/><path d="M6 9.200H18M6 14.800H18" stroke="#fff" stroke-width="3"/></svg></span></div><div class="tb lg" style="left:330.1px;top:54.30000000000001px;width:38.3px;height:39.8px"><span style="width:20px;height:20px"><svg viewBox="0 0 24 24"><rect x="0" y="0" width="24" height="24" rx="3" fill="#000"/><path d="M12 20V5.500M5.500 12.500L12 5.500L18.500 12.500" stroke="#fff" stroke-width="3" fill="none"/></svg></span></div><div class="tb lg" style="left:373.9px;top:54.30000000000001px;width:38.3px;height:39.8px"><span style="width:20px;height:20px"><svg viewBox="0 0 24 24"><rect x="0" y="0" width="24" height="24" rx="3" fill="#000"/><path d="M12 4V18.500M5.500 11.500L12 18.500L18.500 11.500" stroke="#fff" stroke-width="3" fill="none"/></svg></span></div><div class="tb lg" style="left:417.6px;top:54.30000000000001px;width:38.3px;height:39.8px"><span style="width:20px;height:20px"><svg viewBox="0 0 24 24"><circle cx="12" cy="12" r="11.800" fill="#000"/><path d="M4 12H20" stroke="#fff" stroke-width="4.400"/></svg></span></div><div class="tb lg" style="left:461.3px;top:54.30000000000001px;width:38.3px;height:39.8px"><span style="width:20px;height:20px"><svg viewBox="0 0 24 24"><circle cx="12" cy="12" r="11.800" fill="#000"/><path d="M4.500 12H19.500M12 4.500V19.500" stroke="#fff" stroke-width="3.400"/></svg></span></div><div class="tb lg" style="left:505.1px;top:54.30000000000001px;width:38.3px;height:39.8px"><span style="width:20px;height:20px"><svg viewBox="0 0 24 24"><circle cx="12" cy="12" r="11.800" fill="#000"/><path d="M6.500 6.500L17.500 17.500M17.500 6.500L6.500 17.500" stroke="#fff" stroke-width="3.600"/></svg></span></div><div class="tb lg" style="left:548.8px;top:54.30000000000001px;width:38.3px;height:39.8px"><span style="width:20px;height:20px"><svg viewBox="0 0 24 24"><defs><linearGradient id="pg" gradientUnits="userSpaceOnUse" x1="5" y1="19" x2="19" y2="5"><stop offset="0" stop-color="#ff0000"/><stop offset="0.35" stop-color="#e00030"/><stop offset="0.6" stop-color="#8010a0"/><stop offset="1" stop-color="#0a10ff"/></linearGradient></defs><path d="M5.800 18.800L16.800 7.800" stroke="url(#pg)" stroke-width="4.800" stroke-linecap="square"/><path d="M15.600 5.600L19.600 4.600L18.600 8.600Z" fill="#1010f0"/></svg></span></div><div class="tb lg" style="left:592.6px;top:54.30000000000001px;width:38.3px;height:39.8px"><span style="width:20px;height:20px"><svg viewBox="0 0 24 24"><defs><linearGradient id="hg" gradientUnits="userSpaceOnUse" x1="0" y1="0" x2="24" y2="0"><stop offset="0" stop-color="#ff0000"/><stop offset="1" stop-color="#0a0aff"/></linearGradient></defs><rect x="0" y="0" width="24" height="6.300" fill="url(#hg)"/><rect x="0" y="8.850" width="24" height="6.300" fill="url(#hg)"/><rect x="0" y="17.700" width="24" height="6.300" fill="url(#hg)"/></svg></span></div><div class="tb lg" style="left:636.3px;top:54.30000000000001px;width:38.3px;height:39.8px"><span style="width:20px;height:20px"><svg viewBox="0 0 24 24"><defs><linearGradient id="vg" gradientUnits="userSpaceOnUse" x1="0" y1="0" x2="0" y2="24"><stop offset="0" stop-color="#ff0000"/><stop offset="1" stop-color="#0a0aff"/></linearGradient></defs><rect x="0" y="0" width="6.300" height="24" fill="url(#vg)"/><rect x="8.850" y="0" width="6.300" height="24" fill="url(#vg)"/><rect x="17.700" y="0" width="6.300" height="24" fill="url(#vg)"/></svg></span></div><div class="tb lg" style="left:680.0px;top:54.30000000000001px;width:38.3px;height:39.8px"><span style="width:20px;height:20px"><svg viewBox="0 0 24 24"><defs><linearGradient id="cg" x1="0" y1="0" x2="1" y2="0"><stop offset="0" stop-color="#ff2a3a"/><stop offset="0.28" stop-color="#ff60e0"/><stop offset="0.55" stop-color="#3060ff"/><stop offset="1" stop-color="#00f8f0"/></linearGradient></defs><rect x="0" y="0" width="24" height="24" fill="url(#cg)"/></svg></span></div>
<div class="ylab" style="left:5px;top:97.00px;width:39.5px;height:18.72px">100</div>
<div class="ybin" style="left:47px;top:97.60px;width:39px;height:17.62px">100</div>
<div class="ylab" style="left:5px;top:115.72px;width:39.5px;height:18.72px">90</div>
<div class="ybin" style="left:47px;top:116.32px;width:39px;height:17.62px">90</div>
<div class="ylab" style="left:5px;top:134.44px;width:39.5px;height:18.72px">80</div>
<div class="ybin" style="left:47px;top:135.04px;width:39px;height:17.62px">80</div>
<div class="ylab" style="left:5px;top:153.16px;width:39.5px;height:18.72px">70</div>
<div class="ybin" style="left:47px;top:153.76px;width:39px;height:17.62px">70</div>
<div class="ylab" style="left:5px;top:171.88px;width:39.5px;height:18.72px">60</div>
<div class="ybin" style="left:47px;top:172.48px;width:39px;height:17.62px">60</div>
<div class="ylab" style="left:5px;top:190.60px;width:39.5px;height:18.72px">50</div>
<div class="ybin" style="left:47px;top:191.20px;width:39px;height:17.62px">50</div>
<div class="ylab" style="left:5px;top:209.32px;width:39.5px;height:18.72px">40</div>
<div class="ybin" style="left:47px;top:209.92px;width:39px;height:17.62px">40</div>
<div class="ylab" style="left:5px;top:228.04px;width:39.5px;height:18.72px">30</div>
<div class="ybin" style="left:47px;top:228.64px;width:39px;height:17.62px">30</div>
<div class="ylab" style="left:5px;top:246.76px;width:39.5px;height:18.72px">25</div>
<div class="ybin" style="left:47px;top:247.36px;width:39px;height:17.62px">25</div>
<div class="ylab" style="left:5px;top:265.48px;width:39.5px;height:18.72px">20</div>
<div class="ybin" style="left:47px;top:266.08px;width:39px;height:17.62px">20</div>
<div class="ylab" style="left:5px;top:284.20px;width:39.5px;height:18.72px">15</div>
<div class="ybin" style="left:47px;top:284.80px;width:39px;height:17.62px">15</div>
<div class="ylab" style="left:5px;top:302.92px;width:39.5px;height:18.72px">10</div>
<div class="ybin" style="left:47px;top:303.52px;width:39px;height:17.62px">10</div>
<div class="ylab" style="left:5px;top:321.64px;width:39.5px;height:18.72px">5</div>
<div class="ybin" style="left:47px;top:322.24px;width:39px;height:17.62px">5</div>
<div class="ylab" style="left:5px;top:340.36px;width:39.5px;height:18.72px">2</div>
<div class="ybin" style="left:47px;top:340.96px;width:39px;height:17.62px">2</div>
<div class="ylab" style="left:5px;top:359.08px;width:39.5px;height:18.72px">1</div>
<div class="ybin" style="left:47px;top:359.68px;width:39px;height:17.62px">1</div>
<div class="ylab" style="left:5px;top:377.80px;width:39.5px;height:18.72px">0</div>
<div class="ybin" style="left:47px;top:378.40px;width:39px;height:17.62px">0</div>
<svg class="heat" style="left:88.00px;top:97.00px" width="633.20" height="298.20" viewBox="0 0 633.20 298.20"><defs><filter id="rb" x="-5%" y="-5%" width="110%" height="110%"><feGaussianBlur stdDeviation="1.8"/></filter></defs><g filter="url(#rb)"><rect x="-10.00" y="-10.00" width="50.70" height="29.22" fill="#ff5d00"/><rect x="40.20" y="-10.00" width="40.50" height="29.22" fill="#ff5900"/><rect x="80.20" y="-10.00" width="40.50" height="29.22" fill="#ff5300"/><rect x="120.20" y="-10.00" width="40.30" height="29.22" fill="#ff4d00"/><rect x="160.00" y="-10.00" width="40.70" height="29.22" fill="#ff4600"/><rect x="200.20" y="-10.00" width="40.50" height="29.22" fill="#ff4000"/><rect x="240.20" y="-10.00" width="40.50" height="29.22" fill="#ff4500"/><rect x="280.20" y="-10.00" width="39.30" height="29.22" fill="#ff3b00"/><rect x="319.00" y="-10.00" width="40.50" height="29.22" fill="#ff2d00"/><rect x="359.00" y="-10.00" width="39.50" height="29.22" fill="#ff2600"/><rect x="398.00" y="-10.00" width="40.10" height="29.22" fill="#ff2000"/><rect x="437.60" y="-10.00" width="39.50" height="29.22" fill="#ff1900"/><rect x="476.60" y="-10.00" width="40.40" height="29.22" fill="#ff1200"/><rect x="516.50" y="-10.00" width="39.70" height="29.22" fill="#ff0d00"/><rect x="555.70" y="-10.00" width="39.80" height="29.22" fill="#ff0600"/><rect x="595.00" y="-10.00" width="48.70" height="29.22" fill="#ff0000"/><rect x="-10.00" y="18.72" width="50.70" height="19.22" fill="#ff5d00"/><rect x="40.20" y="18.72" width="40.50" height="19.22" fill="#ff5900"/><rect x="80.20" y="18.72" width="40.50" height="19.22" fill="#ff5200"/><rect x="120.20" y="18.72" width="40.30" height="19.22" fill="#ff4800"/><rect x="160.00" y="18.72" width="40.70" height="19.22" fill="#ff5500"/><rect x="200.20" y="18.72" width="40.50" height="19.22" fill="#ff5b00"/><rect x="240.20" y="18.72" width="40.50" height="19.22" fill="#ff4600"/><rect x="280.20" y="18.72" width="39.30" height="19.22" fill="#ff4300"/><rect x="319.00" y="18.72" width="40.50" height="19.22" fill="#ff4300"/><rect x="359.00" y="18.72" width="39.50" height="19.22" fill="#ff3200"/><rect x="398.00" y="18.72" width="40.10" height="19.22" fill="#ff2b00"/><rect x="437.60" y="18.72" width="39.50" height="19.22" fill="#ff2300"/><rect x="476.60" y="18.72" width="40.40" height="19.22" fill="#ff1d00"/><rect x="516.50" y="18.72" width="39.70" height="19.22" fill="#ff1d00"/><rect x="555.70" y="18.72" width="39.80" height="19.22" fill="#ff1f00"/><rect x="595.00" y="18.72" width="48.70" height="19.22" fill="#ff0000"/><rect x="-10.00" y="37.44" width="50.70" height="19.22" fill="#ff5d00"/><rect x="40.20" y="37.44" width="40.50" height="19.22" fill="#ff5900"/><rect x="80.20" y="37.44" width="40.50" height="19.22" fill="#ff5300"/><rect x="120.20" y="37.44" width="40.30" height="19.22" fill="#ff4600"/><rect x="160.00" y="37.44" width="40.70" height="19.22" fill="#ff5200"/><rect x="200.20" y="37.44" width="40.50" height="19.22" fill="#ff5d00"/><rect x="240.20" y="37.44" width="40.50" height="19.22" fill="#ff6800"/><rect x="280.20" y="37.44" width="39.30" height="19.22" fill="#ff5500"/><rect x="319.00" y="37.44" width="40.50" height="19.22" fill="#ff5d00"/><rect x="359.00" y="37.44" width="39.50" height="19.22" fill="#ff4f00"/><rect x="398.00" y="37.44" width="40.10" height="19.22" fill="#ff3100"/><rect x="437.60" y="37.44" width="39.50" height="19.22" fill="#ff2700"/><rect x="476.60" y="37.44" width="40.40" height="19.22" fill="#ff2200"/><rect x="516.50" y="37.44" width="39.70" height="19.22" fill="#ff2000"/><rect x="555.70" y="37.44" width="39.80" height="19.22" fill="#ff1200"/><rect x="595.00" y="37.44" width="48.70" height="19.22" fill="#ff0000"/><rect x="-10.00" y="56.16" width="50.70" height="19.22" fill="#ff7600"/><rect x="40.20" y="56.16" width="40.50" height="19.22" fill="#ff7300"/><rect x="80.20" y="56.16" width="40.50" height="19.22" fill="#ff6900"/><rect x="120.20" y="56.16" width="40.30" height="19.22" fill="#ff5300"/><rect x="160.00" y="56.16" width="40.70" height="19.22" fill="#ff5e00"/><rect x="200.20" y="56.16" width="40.50" height="19.22" fill="#ff6000"/><rect x="240.20" y="56.16" width="40.50" height="19.22" fill="#ff7200"/><rect x="280.20" y="56.16" width="39.30" height="19.22" fill="#ff7500"/><rect x="319.00" y="56.16" width="40.50" height="19.22" fill="#ff6800"/><rect x="359.00" y="56.16" width="39.50" height="19.22" fill="#ff5500"/><rect x="398.00" y="56.16" width="40.10" height="19.22" fill="#ff3900"/><rect x="437.60" y="56.16" width="39.50" height="19.22" fill="#ff3b00"/><rect x="476.60" y="56.16" width="40.40" height="19.22" fill="#ff3d00"/><rect x="516.50" y="56.16" width="39.70" height="19.22" fill="#ff3800"/><rect x="555.70" y="56.16" width="39.80" height="19.22" fill="#ff3200"/><rect x="595.00" y="56.16" width="48.70" height="19.22" fill="#ff0d00"/><rect x="-10.00" y="74.88" width="50.70" height="19.22" fill="#ff9300"/><rect x="40.20" y="74.88" width="40.50" height="19.22" fill="#ff7000"/><rect x="80.20" y="74.88" width="40.50" height="19.22" fill="#ff7400"/><rect x="120.20" y="74.88" width="40.30" height="19.22" fill="#ff6800"/><rect x="160.00" y="74.88" width="40.70" height="19.22" fill="#ff5f00"/><rect x="200.20" y="74.88" width="40.50" height="19.22" fill="#ff6c00"/><rect x="240.20" y="74.88" width="40.50" height="19.22" fill="#ff7f00"/><rect x="280.20" y="74.88" width="39.30" height="19.22" fill="#ff7b00"/><rect x="319.00" y="74.88" width="40.50" height="19.22" fill="#ff6200"/><rect x="359.00" y="74.88" width="39.50" height="19.22" fill="#ff5900"/><rect x="398.00" y="74.88" width="40.10" height="19.22" fill="#ff4000"/><rect x="437.60" y="74.88" width="39.50" height="19.22" fill="#ff4800"/><rect x="476.60" y="74.88" width="40.40" height="19.22" fill="#ff4000"/><rect x="516.50" y="74.88" width="39.70" height="19.22" fill="#ff3b00"/><rect x="555.70" y="74.88" width="39.80" height="19.22" fill="#ff3500"/><rect x="595.00" y="74.88" width="48.70" height="19.22" fill="#ff2200"/><rect x="-10.00" y="93.60" width="50.70" height="19.22" fill="#ffa600"/><rect x="40.20" y="93.60" width="40.50" height="19.22" fill="#ff7700"/><rect x="80.20" y="93.60" width="40.50" height="19.22" fill="#ff8100"/><rect x="120.20" y="93.60" width="40.30" height="19.22" fill="#ff7300"/><rect x="160.00" y="93.60" width="40.70" height="19.22" fill="#ff7000"/><rect x="200.20" y="93.60" width="40.50" height="19.22" fill="#ff6c00"/><rect x="240.20" y="93.60" width="40.50" height="19.22" fill="#ff8100"/><rect x="280.20" y="93.60" width="39.30" height="19.22" fill="#ff8200"/><rect x="319.00" y="93.60" width="40.50" height="19.22" fill="#ff7600"/><rect x="359.00" y="93.60" width="39.50" height="19.22" fill="#ff6800"/><rect x="398.00" y="93.60" width="40.10" height="19.22" fill="#ff5000"/><rect x="437.60" y="93.60" width="39.50" height="19.22" fill="#ff5100"/><rect x="476.60" y="93.60" width="40.40" height="19.22" fill="#ff4600"/><rect x="516.50" y="93.60" width="39.70" height="19.22" fill="#ff4000"/><rect x="555.70" y="93.60" width="39.80" height="19.22" fill="#ff3b00"/><rect x="595.00" y="93.60" width="48.70" height="19.22" fill="#ff3200"/><rect x="-10.00" y="112.32" width="50.70" height="19.22" fill="#ff7b00"/><rect x="40.20" y="112.32" width="40.50" height="19.22" fill="#ff7d00"/><rect x="80.20" y="112.32" width="40.50" height="19.22" fill="#ff9600"/><rect x="120.20" y="112.32" width="40.30" height="19.22" fill="#ff9600"/><rect x="160.00" y="112.32" width="40.70" height="19.22" fill="#ff7800"/><rect x="200.20" y="112.32" width="40.50" height="19.22" fill="#ff7100"/><rect x="240.20" y="112.32" width="40.50" height="19.22" fill="#ff9300"/><rect x="280.20" y="112.32" width="39.30" height="19.22" fill="#ff9b00"/><rect x="319.00" y="112.32" width="40.50" height="19.22" fill="#ff8a00"/><rect x="359.00" y="112.32" width="39.50" height="19.22" fill="#ff8f00"/><rect x="398.00" y="112.32" width="40.10" height="19.22" fill="#ff7200"/><rect x="437.60" y="112.32" width="39.50" height="19.22" fill="#ff6e00"/><rect x="476.60" y="112.32" width="40.40" height="19.22" fill="#ff6b00"/><rect x="516.50" y="112.32" width="39.70" height="19.22" fill="#ff6700"/><rect x="555.70" y="112.32" width="39.80" height="19.22" fill="#ff6200"/><rect x="595.00" y="112.32" width="48.70" height="19.22" fill="#ff4700"/><rect x="-10.00" y="131.04" width="50.70" height="19.22" fill="#ff8000"/><rect x="40.20" y="131.04" width="40.50" height="19.22" fill="#ff7100"/><rect x="80.20" y="131.04" width="40.50" height="19.22" fill="#ffa900"/><rect x="120.20" y="131.04" width="40.30" height="19.22" fill="#ffae00"/><rect x="160.00" y="131.04" width="40.70" height="19.22" fill="#ff9900"/><rect x="200.20" y="131.04" width="40.50" height="19.22" fill="#ff8b00"/><rect x="240.20" y="131.04" width="40.50" height="19.22" fill="#ffae00"/><rect x="280.20" y="131.04" width="39.30" height="19.22" fill="#ff9f00"/><rect x="319.00" y="131.04" width="40.50" height="19.22" fill="#ff8d00"/><rect x="359.00" y="131.04" width="39.50" height="19.22" fill="#ff9d00"/><rect x="398.00" y="131.04" width="40.10" height="19.22" fill="#ff8b00"/><rect x="437.60" y="131.04" width="39.50" height="19.22" fill="#ff8000"/><rect x="476.60" y="131.04" width="40.40" height="19.22" fill="#ff7600"/><rect x="516.50" y="131.04" width="39.70" height="19.22" fill="#ff6e00"/><rect x="555.70" y="131.04" width="39.80" height="19.22" fill="#ff6000"/><rect x="595.00" y="131.04" width="48.70" height="19.22" fill="#ff5700"/><rect x="-10.00" y="149.76" width="50.70" height="19.22" fill="#ff9900"/><rect x="40.20" y="149.76" width="40.50" height="19.22" fill="#ff7800"/><rect x="80.20" y="149.76" width="40.50" height="19.22" fill="#ffbc00"/><rect x="120.20" y="149.76" width="40.30" height="19.22" fill="#ffc400"/><rect x="160.00" y="149.76" width="40.70" height="19.22" fill="#ffac00"/><rect x="200.20" y="149.76" width="40.50" height="19.22" fill="#ff8c00"/><rect x="240.20" y="149.76" width="40.50" height="19.22" fill="#ffb700"/><rect x="280.20" y="149.76" width="39.30" height="19.22" fill="#ffbe00"/><rect x="319.00" y="149.76" width="40.50" height="19.22" fill="#ffb100"/><rect x="359.00" y="149.76" width="39.50" height="19.22" fill="#ffb600"/><rect x="398.00" y="149.76" width="40.10" height="19.22" fill="#ffa000"/><rect x="437.60" y="149.76" width="39.50" height="19.22" fill="#ff9d00"/><rect x="476.60" y="149.76" width="40.40" height="19.22" fill="#ff9600"/><rect x="516.50" y="149.76" width="39.70" height="19.22" fill="#ff8f00"/><rect x="555.70" y="149.76" width="39.80" height="19.22" fill="#ff8600"/><rect x="595.00" y="149.76" width="48.70" height="19.22" fill="#ff7e00"/><rect x="-10.00" y="168.48" width="50.70" height="19.22" fill="#ffb900"/><rect x="40.20" y="168.48" width="40.50" height="19.22" fill="#ffcb00"/><rect x="80.20" y="168.48" width="40.50" height="19.22" fill="#ffca00"/><rect x="120.20" y="168.48" width="40.30" height="19.22" fill="#ffd200"/><rect x="160.00" y="168.48" width="40.70" height="19.22" fill="#ffac00"/><rect x="200.20" y="168.48" width="40.50" height="19.22" fill="#ff8900"/><rect x="240.20" y="168.48" width="40.50" height="19.22" fill="#ffd700"/><rect x="280.20" y="168.48" width="39.30" height="19.22" fill="#ffd500"/><rect x="319.00" y="168.48" width="40.50" height="19.22" fill="#ffca00"/><rect x="359.00" y="168.48" width="39.50" height="19.22" fill="#ffbe00"/><rect x="398.00" y="168.48" width="40.10" height="19.22" fill="#ffbc00"/><rect x="437.60" y="168.48" width="39.50" height="19.22" fill="#ffb400"/><rect x="476.60" y="168.48" width="40.40" height="19.22" fill="#ffab00"/><rect x="516.50" y="168.48" width="39.70" height="19.22" fill="#ffa600"/><rect x="555.70" y="168.48" width="39.80" height="19.22" fill="#ffa100"/><rect x="595.00" y="168.48" width="48.70" height="19.22" fill="#ff9c00"/><rect x="-10.00" y="187.20" width="50.70" height="19.22" fill="#ffe200"/><rect x="40.20" y="187.20" width="40.50" height="19.22" fill="#ffff00"/><rect x="80.20" y="187.20" width="40.50" height="19.22" fill="#ffd300"/><rect x="120.20" y="187.20" width="40.30" height="19.22" fill="#ffef00"/><rect x="160.00" y="187.20" width="40.70" height="19.22" fill="#ffde00"/><rect x="200.20" y="187.20" width="40.50" height="19.22" fill="#ffb600"/><rect x="240.20" y="187.20" width="40.50" height="19.22" fill="#ffec00"/><rect x="280.20" y="187.20" width="39.30" height="19.22" fill="#ffeb00"/><rect x="319.00" y="187.20" width="40.50" height="19.22" fill="#ffeb00"/><rect x="359.00" y="187.20" width="39.50" height="19.22" fill="#ffde00"/><rect x="398.00" y="187.20" width="40.10" height="19.22" fill="#ffd100"/><rect x="437.60" y="187.20" width="39.50" height="19.22" fill="#ffc600"/><rect x="476.60" y="187.20" width="40.40" height="19.22" fill="#ffb900"/><rect x="516.50" y="187.20" width="39.70" height="19.22" fill="#ffb500"/><rect x="555.70" y="187.20" width="39.80" height="19.22" fill="#ffb100"/><rect x="595.00" y="187.20" width="48.70" height="19.22" fill="#ffa400"/><rect x="-10.00" y="205.92" width="50.70" height="19.22" fill="#ffff00"/><rect x="40.20" y="205.92" width="40.50" height="19.22" fill="#fffd00"/><rect x="80.20" y="205.92" width="40.50" height="19.22" fill="#ffff00"/><rect x="120.20" y="205.92" width="40.30" height="19.22" fill="#ffff00"/><rect x="160.00" y="205.92" width="40.70" height="19.22" fill="#fff200"/><rect x="200.20" y="205.92" width="40.50" height="19.22" fill="#ffd500"/><rect x="240.20" y="205.92" width="40.50" height="19.22" fill="#ffff00"/><rect x="280.20" y="205.92" width="39.30" height="19.22" fill="#ffff00"/><rect x="319.00" y="205.92" width="40.50" height="19.22" fill="#ffff00"/><rect x="359.00" y="205.92" width="39.50" height="19.22" fill="#ffff00"/><rect x="398.00" y="205.92" width="40.10" height="19.22" fill="#ffe400"/><rect x="437.60" y="205.92" width="39.50" height="19.22" fill="#ffd700"/><rect x="476.60" y="205.92" width="40.40" height="19.22" fill="#ffcd00"/><rect x="516.50" y="205.92" width="39.70" height="19.22" fill="#ffd500"/><rect x="555.70" y="205.92" width="39.80" height="19.22" fill="#ffb900"/><rect x="595.00" y="205.92" width="48.70" height="19.22" fill="#ffab00"/><rect x="-10.00" y="224.64" width="50.70" height="19.22" fill="#ffff00"/><rect x="40.20" y="224.64" width="40.50" height="19.22" fill="#ffff00"/><rect x="80.20" y="224.64" width="40.50" height="19.22" fill="#ffff00"/><rect x="120.20" y="224.64" width="40.30" height="19.22" fill="#ffff00"/><rect x="160.00" y="224.64" width="40.70" height="19.22" fill="#ffff00"/><rect x="200.20" y="224.64" width="40.50" height="19.22" fill="#ffff00"/><rect x="240.20" y="224.64" width="40.50" height="19.22" fill="#ffff00"/><rect x="280.20" y="224.64" width="39.30" height="19.22" fill="#e0ff00"/><rect x="319.00" y="224.64" width="40.50" height="19.22" fill="#ffff00"/><rect x="359.00" y="224.64" width="39.50" height="19.22" fill="#ffff00"/><rect x="398.00" y="224.64" width="40.10" height="19.22" fill="#ffff00"/><rect x="437.60" y="224.64" width="39.50" height="19.22" fill="#fffc00"/><rect x="476.60" y="224.64" width="40.40" height="19.22" fill="#fff100"/><rect x="516.50" y="224.64" width="39.70" height="19.22" fill="#ffee00"/><rect x="555.70" y="224.64" width="39.80" height="19.22" fill="#ffc700"/><rect x="595.00" y="224.64" width="48.70" height="19.22" fill="#ffb800"/><rect x="-10.00" y="243.36" width="50.70" height="19.22" fill="#ccff00"/><rect x="40.20" y="243.36" width="40.50" height="19.22" fill="#d7ff00"/><rect x="80.20" y="243.36" width="40.50" height="19.22" fill="#f7ff00"/><rect x="120.20" y="243.36" width="40.30" height="19.22" fill="#fbff00"/><rect x="160.00" y="243.36" width="40.70" height="19.22" fill="#c9ff00"/><rect x="200.20" y="243.36" width="40.50" height="19.22" fill="#dbff00"/><rect x="240.20" y="243.36" width="40.50" height="19.22" fill="#aeff00"/><rect x="280.20" y="243.36" width="39.30" height="19.22" fill="#b6ff00"/><rect x="319.00" y="243.36" width="40.50" height="19.22" fill="#cfff00"/><rect x="359.00" y="243.36" width="39.50" height="19.22" fill="#ffff00"/><rect x="398.00" y="243.36" width="40.10" height="19.22" fill="#f2ff00"/><rect x="437.60" y="243.36" width="39.50" height="19.22" fill="#ffff00"/><rect x="476.60" y="243.36" width="40.40" height="19.22" fill="#ffff00"/><rect x="516.50" y="243.36" width="39.70" height="19.22" fill="#ffd900"/><rect x="555.70" y="243.36" width="39.80" height="19.22" fill="#ffb400"/><rect x="595.00" y="243.36" width="48.70" height="19.22" fill="#ffa600"/><rect x="-10.00" y="262.08" width="50.70" height="19.22" fill="#74ff00"/><rect x="40.20" y="262.08" width="40.50" height="19.22" fill="#71ff00"/><rect x="80.20" y="262.08" width="40.50" height="19.22" fill="#44ff00"/><rect x="120.20" y="262.08" width="40.30" height="19.22" fill="#5fff00"/><rect x="160.00" y="262.08" width="40.70" height="19.22" fill="#6fff00"/><rect x="200.20" y="262.08" width="40.50" height="19.22" fill="#71ff00"/><rect x="240.20" y="262.08" width="40.50" height="19.22" fill="#7aff00"/><rect x="280.20" y="262.08" width="39.30" height="19.22" fill="#88ff00"/><rect x="319.00" y="262.08" width="40.50" height="19.22" fill="#7cff00"/><rect x="359.00" y="262.08" width="39.50" height="19.22" fill="#50ff00"/><rect x="398.00" y="262.08" width="40.10" height="19.22" fill="#66ff00"/><rect x="437.60" y="262.08" width="39.50" height="19.22" fill="#5aff00"/><rect x="476.60" y="262.08" width="40.40" height="19.22" fill="#2eff00"/><rect x="516.50" y="262.08" width="39.70" height="19.22" fill="#9eff00"/><rect x="555.70" y="262.08" width="39.80" height="19.22" fill="#02fc00"/><rect x="595.00" y="262.08" width="48.70" height="19.22" fill="#00e400"/><rect x="-10.00" y="280.80" width="50.70" height="27.90" fill="#74ff00"/><rect x="40.20" y="280.80" width="40.50" height="27.90" fill="#71ff00"/><rect x="80.20" y="280.80" width="40.50" height="27.90" fill="#44ff00"/><rect x="120.20" y="280.80" width="40.30" height="27.90" fill="#5fff00"/><rect x="160.00" y="280.80" width="40.70" height="27.90" fill="#6fff00"/><rect x="200.20" y="280.80" width="40.50" height="27.90" fill="#71ff00"/><rect x="240.20" y="280.80" width="40.50" height="27.90" fill="#7aff00"/><rect x="280.20" y="280.80" width="39.30" height="27.90" fill="#88ff00"/><rect x="319.00" y="280.80" width="40.50" height="27.90" fill="#7cff00"/><rect x="359.00" y="280.80" width="39.50" height="27.90" fill="#50ff00"/><rect x="398.00" y="280.80" width="40.10" height="27.90" fill="#66ff00"/><rect x="437.60" y="280.80" width="39.50" height="27.90" fill="#5aff00"/><rect x="476.60" y="280.80" width="40.40" height="27.90" fill="#2eff00"/><rect x="516.50" y="280.80" width="39.70" height="27.90" fill="#9eff00"/><rect x="555.70" y="280.80" width="39.80" height="27.90" fill="#02fc00"/><rect x="595.00" y="280.80" width="48.70" height="27.90" fill="#00e400"/></g><path d="M40.70 0V298.20M80.70 0V298.20M120.70 0V298.20M160.50 0V298.20M200.70 0V298.20M240.70 0V298.20M280.70 0V298.20M319.50 0V298.20M359.50 0V298.20M398.50 0V298.20M438.10 0V298.20M477.10 0V298.20M517.00 0V298.20M556.20 0V298.20M595.50 0V298.20M0 19.02H633.20M0 37.74H633.20M0 56.46H633.20M0 75.18H633.20M0 93.90H633.20M0 112.62H633.20M0 131.34H633.20M0 150.06H633.20M0 168.78H633.20M0 187.50H633.20M0 206.22H633.20M0 224.94H633.20M0 243.66H633.20M0 262.38H633.20M0 281.10H633.20" stroke="rgba(54,54,58,0.93)" stroke-width="1.25" fill="none"/></svg>
<div class="cv" style="left:88.00px;top:97.00px;width:40.20px;height:18.72px">80.1</div>
<div class="cv" style="left:128.20px;top:97.00px;width:40.00px;height:18.72px">80.7</div>
<div class="cv" style="left:168.20px;top:97.00px;width:40.00px;height:18.72px">81.6</div>
<div class="cv" style="left:208.20px;top:97.00px;width:39.80px;height:18.72px">82.4</div>
<div class="cv" style="left:248.00px;top:97.00px;width:40.20px;height:18.72px">83.3</div>
<div class="cv" style="left:288.20px;top:97.00px;width:40.00px;height:18.72px">84.2</div>
<div class="cv" style="left:328.20px;top:97.00px;width:40.00px;height:18.72px">83.4</div>
<div class="cv" style="left:368.20px;top:97.00px;width:38.80px;height:18.72px">84.9</div>
<div class="cv" style="left:407.00px;top:97.00px;width:40.00px;height:18.72px">86.8</div>
<div class="cv" style="left:447.00px;top:97.00px;width:39.00px;height:18.72px">87.7</div>
<div class="cv" style="left:486.00px;top:97.00px;width:39.60px;height:18.72px">88.6</div>
<div class="cv" style="left:525.60px;top:97.00px;width:39.00px;height:18.72px">89.5</div>
<div class="cv" style="left:564.60px;top:97.00px;width:39.90px;height:18.72px">90.4</div>
<div class="cv" style="left:604.50px;top:97.00px;width:39.20px;height:18.72px">91.2</div>
<div class="cv" style="left:643.70px;top:97.00px;width:39.30px;height:18.72px">92.1</div>
<div class="cv" style="left:683.00px;top:97.00px;width:38.20px;height:18.72px">93.0</div>
<div class="cv" style="left:88.00px;top:115.72px;width:40.20px;height:18.72px">80.1</div>
<div class="cv" style="left:128.20px;top:115.72px;width:40.00px;height:18.72px">80.7</div>
<div class="cv" style="left:168.20px;top:115.72px;width:40.00px;height:18.72px">81.7</div>
<div class="cv" style="left:208.20px;top:115.72px;width:39.80px;height:18.72px">83.0</div>
<div class="cv" style="left:248.00px;top:115.72px;width:40.20px;height:18.72px">81.3</div>
<div class="cv" style="left:288.20px;top:115.72px;width:40.00px;height:18.72px">80.5</div>
<div class="cv" style="left:328.20px;top:115.72px;width:40.00px;height:18.72px">83.3</div>
<div class="cv" style="left:368.20px;top:115.72px;width:38.80px;height:18.72px">83.8</div>
<div class="cv" style="left:407.00px;top:115.72px;width:40.00px;height:18.72px">83.7</div>
<div class="cv" style="left:447.00px;top:115.72px;width:39.00px;height:18.72px">86.1</div>
<div class="cv" style="left:486.00px;top:115.72px;width:39.60px;height:18.72px">87.0</div>
<div class="cv" style="left:525.60px;top:115.72px;width:39.00px;height:18.72px">88.1</div>
<div class="cv" style="left:564.60px;top:115.72px;width:39.90px;height:18.72px">89.0</div>
<div class="cv" style="left:604.50px;top:115.72px;width:39.20px;height:18.72px">88.9</div>
<div class="cv" style="left:643.70px;top:115.72px;width:39.30px;height:18.72px">88.7</div>
<div class="cv" style="left:683.00px;top:115.72px;width:38.20px;height:18.72px">93.0</div>
<div class="cv" style="left:88.00px;top:134.44px;width:40.20px;height:18.72px">80.1</div>
<div class="cv" style="left:128.20px;top:134.44px;width:40.00px;height:18.72px">80.7</div>
<div class="cv" style="left:168.20px;top:134.44px;width:40.00px;height:18.72px">81.6</div>
<div class="cv" style="left:208.20px;top:134.44px;width:39.80px;height:18.72px">83.3</div>
<div class="cv" style="left:248.00px;top:134.44px;width:40.20px;height:18.72px">81.7</div>
<div class="cv" style="left:288.20px;top:134.44px;width:40.00px;height:18.72px">80.2</div>
<div class="cv" style="left:328.20px;top:134.44px;width:40.00px;height:18.72px">78.7</div>
<div class="cv" style="left:368.20px;top:134.44px;width:38.80px;height:18.72px">81.2</div>
<div class="cv" style="left:407.00px;top:134.44px;width:40.00px;height:18.72px">80.1</div>
<div class="cv" style="left:447.00px;top:134.44px;width:39.00px;height:18.72px">82.1</div>
<div class="cv" style="left:486.00px;top:134.44px;width:39.60px;height:18.72px">86.2</div>
<div class="cv" style="left:525.60px;top:134.44px;width:39.00px;height:18.72px">87.6</div>
<div class="cv" style="left:564.60px;top:134.44px;width:39.90px;height:18.72px">88.3</div>
<div class="cv" style="left:604.50px;top:134.44px;width:39.20px;height:18.72px">88.5</div>
<div class="cv" style="left:643.70px;top:134.44px;width:39.30px;height:18.72px">90.5</div>
<div class="cv" style="left:683.00px;top:134.44px;width:38.20px;height:18.72px">93.0</div>
<div class="cv" style="left:88.00px;top:153.16px;width:40.20px;height:18.72px">76.8</div>
<div class="cv" style="left:128.20px;top:153.16px;width:40.00px;height:18.72px">77.2</div>
<div class="cv" style="left:168.20px;top:153.16px;width:40.00px;height:18.72px">78.5</div>
<div class="cv" style="left:208.20px;top:153.16px;width:39.80px;height:18.72px">81.6</div>
<div class="cv" style="left:248.00px;top:153.16px;width:40.20px;height:18.72px">80.0</div>
<div class="cv" style="left:288.20px;top:153.16px;width:40.00px;height:18.72px">79.8</div>
<div class="cv" style="left:328.20px;top:153.16px;width:40.00px;height:18.72px">77.3</div>
<div class="cv" style="left:368.20px;top:153.16px;width:38.80px;height:18.72px">76.9</div>
<div class="cv" style="left:407.00px;top:153.16px;width:40.00px;height:18.72px">78.6</div>
<div class="cv" style="left:447.00px;top:153.16px;width:39.00px;height:18.72px">81.2</div>
<div class="cv" style="left:486.00px;top:153.16px;width:39.60px;height:18.72px">85.1</div>
<div class="cv" style="left:525.60px;top:153.16px;width:39.00px;height:18.72px">84.8</div>
<div class="cv" style="left:564.60px;top:153.16px;width:39.90px;height:18.72px">84.6</div>
<div class="cv" style="left:604.50px;top:153.16px;width:39.20px;height:18.72px">85.3</div>
<div class="cv" style="left:643.70px;top:153.16px;width:39.30px;height:18.72px">86.1</div>
<div class="cv" style="left:683.00px;top:153.16px;width:38.20px;height:18.72px">91.1</div>
<div class="cv" style="left:88.00px;top:171.88px;width:40.20px;height:18.72px">72.7</div>
<div class="cv" style="left:128.20px;top:171.88px;width:40.00px;height:18.72px">77.5</div>
<div class="cv" style="left:168.20px;top:171.88px;width:40.00px;height:18.72px">77.0</div>
<div class="cv" style="left:208.20px;top:171.88px;width:39.80px;height:18.72px">78.6</div>
<div class="cv" style="left:248.00px;top:171.88px;width:40.20px;height:18.72px">79.9</div>
<div class="cv" style="left:288.20px;top:171.88px;width:40.00px;height:18.72px">78.1</div>
<div class="cv" style="left:328.20px;top:171.88px;width:40.00px;height:18.72px">75.5</div>
<div class="cv" style="left:368.20px;top:171.88px;width:38.80px;height:18.72px">76.0</div>
<div class="cv" style="left:407.00px;top:171.88px;width:40.00px;height:18.72px">79.5</div>
<div class="cv" style="left:447.00px;top:171.88px;width:39.00px;height:18.72px">80.7</div>
<div class="cv" style="left:486.00px;top:171.88px;width:39.60px;height:18.72px">84.2</div>
<div class="cv" style="left:525.60px;top:171.88px;width:39.00px;height:18.72px">83.1</div>
<div class="cv" style="left:564.60px;top:171.88px;width:39.90px;height:18.72px">84.1</div>
<div class="cv" style="left:604.50px;top:171.88px;width:39.20px;height:18.72px">84.8</div>
<div class="cv" style="left:643.70px;top:171.88px;width:39.30px;height:18.72px">85.7</div>
<div class="cv" style="left:683.00px;top:171.88px;width:38.20px;height:18.72px">88.3</div>
<div class="cv" style="left:88.00px;top:190.60px;width:40.20px;height:18.72px">70.1</div>
<div class="cv" style="left:128.20px;top:190.60px;width:40.00px;height:18.72px">76.6</div>
<div class="cv" style="left:168.20px;top:190.60px;width:40.00px;height:18.72px">75.2</div>
<div class="cv" style="left:208.20px;top:190.60px;width:39.80px;height:18.72px">77.2</div>
<div class="cv" style="left:248.00px;top:190.60px;width:40.20px;height:18.72px">77.5</div>
<div class="cv" style="left:288.20px;top:190.60px;width:40.00px;height:18.72px">78.1</div>
<div class="cv" style="left:328.20px;top:190.60px;width:40.00px;height:18.72px">75.2</div>
<div class="cv" style="left:368.20px;top:190.60px;width:38.80px;height:18.72px">75.1</div>
<div class="cv" style="left:407.00px;top:190.60px;width:40.00px;height:18.72px">76.7</div>
<div class="cv" style="left:447.00px;top:190.60px;width:39.00px;height:18.72px">78.7</div>
<div class="cv" style="left:486.00px;top:190.60px;width:39.60px;height:18.72px">82.0</div>
<div class="cv" style="left:525.60px;top:190.60px;width:39.00px;height:18.72px">81.8</div>
<div class="cv" style="left:564.60px;top:190.60px;width:39.90px;height:18.72px">83.3</div>
<div class="cv" style="left:604.50px;top:190.60px;width:39.20px;height:18.72px">84.2</div>
<div class="cv" style="left:643.70px;top:190.60px;width:39.30px;height:18.72px">84.9</div>
<div class="cv" style="left:683.00px;top:190.60px;width:38.20px;height:18.72px">86.0</div>
<div class="cv" style="left:88.00px;top:209.32px;width:40.20px;height:18.72px">76.0</div>
<div class="cv" style="left:128.20px;top:209.32px;width:40.00px;height:18.72px">75.8</div>
<div class="cv" style="left:168.20px;top:209.32px;width:40.00px;height:18.72px">72.4</div>
<div class="cv" style="left:208.20px;top:209.32px;width:39.80px;height:18.72px">72.4</div>
<div class="cv" style="left:248.00px;top:209.32px;width:40.20px;height:18.72px">76.4</div>
<div class="cv" style="left:288.20px;top:209.32px;width:40.00px;height:18.72px">77.4</div>
<div class="cv" style="left:328.20px;top:209.32px;width:40.00px;height:18.72px">72.8</div>
<div class="cv" style="left:368.20px;top:209.32px;width:38.80px;height:18.72px">71.7</div>
<div class="cv" style="left:407.00px;top:209.32px;width:40.00px;height:18.72px">74.0</div>
<div class="cv" style="left:447.00px;top:209.32px;width:39.00px;height:18.72px">73.3</div>
<div class="cv" style="left:486.00px;top:209.32px;width:39.60px;height:18.72px">77.3</div>
<div class="cv" style="left:525.60px;top:209.32px;width:39.00px;height:18.72px">77.9</div>
<div class="cv" style="left:564.60px;top:209.32px;width:39.90px;height:18.72px">78.2</div>
<div class="cv" style="left:604.50px;top:209.32px;width:39.20px;height:18.72px">78.8</div>
<div class="cv" style="left:643.70px;top:209.32px;width:39.30px;height:18.72px">79.5</div>
<div class="cv" style="left:683.00px;top:209.32px;width:38.20px;height:18.72px">83.2</div>
<div class="cv" style="left:88.00px;top:228.04px;width:40.20px;height:18.72px">75.4</div>
<div class="cv" style="left:128.20px;top:228.04px;width:40.00px;height:18.72px">77.4</div>
<div class="cv" style="left:168.20px;top:228.04px;width:40.00px;height:18.72px">69.7</div>
<div class="cv" style="left:208.20px;top:228.04px;width:39.80px;height:18.72px">69.1</div>
<div class="cv" style="left:248.00px;top:228.04px;width:40.20px;height:18.72px">72.0</div>
<div class="cv" style="left:288.20px;top:228.04px;width:40.00px;height:18.72px">73.8</div>
<div class="cv" style="left:328.20px;top:228.04px;width:40.00px;height:18.72px">69.1</div>
<div class="cv" style="left:368.20px;top:228.04px;width:38.80px;height:18.72px">71.1</div>
<div class="cv" style="left:407.00px;top:228.04px;width:40.00px;height:18.72px">73.6</div>
<div class="cv" style="left:447.00px;top:228.04px;width:39.00px;height:18.72px">71.4</div>
<div class="cv" style="left:486.00px;top:228.04px;width:39.60px;height:18.72px">73.8</div>
<div class="cv" style="left:525.60px;top:228.04px;width:39.00px;height:18.72px">75.4</div>
<div class="cv" style="left:564.60px;top:228.04px;width:39.90px;height:18.72px">76.8</div>
<div class="cv" style="left:604.50px;top:228.04px;width:39.20px;height:18.72px">77.8</div>
<div class="cv" style="left:643.70px;top:228.04px;width:39.30px;height:18.72px">79.7</div>
<div class="cv" style="left:683.00px;top:228.04px;width:38.20px;height:18.72px">81.0</div>
<div class="cv" style="left:88.00px;top:246.76px;width:40.20px;height:18.72px">72.0</div>
<div class="cv" style="left:128.20px;top:246.76px;width:40.00px;height:18.72px">76.4</div>
<div class="cv" style="left:168.20px;top:246.76px;width:40.00px;height:18.72px">67.1</div>
<div class="cv" style="left:208.20px;top:246.76px;width:39.80px;height:18.72px">66.0</div>
<div class="cv" style="left:248.00px;top:246.76px;width:40.20px;height:18.72px">69.3</div>
<div class="cv" style="left:288.20px;top:246.76px;width:40.00px;height:18.72px">73.7</div>
<div class="cv" style="left:328.20px;top:246.76px;width:40.00px;height:18.72px">67.8</div>
<div class="cv" style="left:368.20px;top:246.76px;width:38.80px;height:18.72px">66.8</div>
<div class="cv" style="left:407.00px;top:246.76px;width:40.00px;height:18.72px">68.7</div>
<div class="cv" style="left:447.00px;top:246.76px;width:39.00px;height:18.72px">67.9</div>
<div class="cv" style="left:486.00px;top:246.76px;width:39.60px;height:18.72px">71.0</div>
<div class="cv" style="left:525.60px;top:246.76px;width:39.00px;height:18.72px">71.4</div>
<div class="cv" style="left:564.60px;top:246.76px;width:39.90px;height:18.72px">72.4</div>
<div class="cv" style="left:604.50px;top:246.76px;width:39.20px;height:18.72px">73.3</div>
<div class="cv" style="left:643.70px;top:246.76px;width:39.30px;height:18.72px">74.6</div>
<div class="cv" style="left:683.00px;top:246.76px;width:38.20px;height:18.72px">75.7</div>
<div class="cv" style="left:88.00px;top:265.48px;width:40.20px;height:18.72px">67.5</div>
<div class="cv" style="left:128.20px;top:265.48px;width:40.00px;height:18.72px">65.1</div>
<div class="cv" style="left:168.20px;top:265.48px;width:40.00px;height:18.72px">65.2</div>
<div class="cv" style="left:208.20px;top:265.48px;width:39.80px;height:18.72px">64.1</div>
<div class="cv" style="left:248.00px;top:265.48px;width:40.20px;height:18.72px">69.3</div>
<div class="cv" style="left:288.20px;top:265.48px;width:40.00px;height:18.72px">74.1</div>
<div class="cv" style="left:328.20px;top:265.48px;width:40.00px;height:18.72px">63.4</div>
<div class="cv" style="left:368.20px;top:265.48px;width:38.80px;height:18.72px">63.7</div>
<div class="cv" style="left:407.00px;top:265.48px;width:40.00px;height:18.72px">65.2</div>
<div class="cv" style="left:447.00px;top:265.48px;width:39.00px;height:18.72px">66.9</div>
<div class="cv" style="left:486.00px;top:265.48px;width:39.60px;height:18.72px">67.1</div>
<div class="cv" style="left:525.60px;top:265.48px;width:39.00px;height:18.72px">68.2</div>
<div class="cv" style="left:564.60px;top:265.48px;width:39.90px;height:18.72px">69.5</div>
<div class="cv" style="left:604.50px;top:265.48px;width:39.20px;height:18.72px">70.1</div>
<div class="cv" style="left:643.70px;top:265.48px;width:39.30px;height:18.72px">70.8</div>
<div class="cv" style="left:683.00px;top:265.48px;width:38.20px;height:18.72px">71.5</div>
<div class="cv" style="left:88.00px;top:284.20px;width:40.20px;height:18.72px">61.9</div>
<div class="cv" style="left:128.20px;top:284.20px;width:40.00px;height:18.72px">57.3</div>
<div class="cv" style="left:168.20px;top:284.20px;width:40.00px;height:18.72px">64.0</div>
<div class="cv" style="left:208.20px;top:284.20px;width:39.80px;height:18.72px">60.1</div>
<div class="cv" style="left:248.00px;top:284.20px;width:40.20px;height:18.72px">62.4</div>
<div class="cv" style="left:288.20px;top:284.20px;width:40.00px;height:18.72px">68.0</div>
<div class="cv" style="left:328.20px;top:284.20px;width:40.00px;height:18.72px">60.6</div>
<div class="cv" style="left:368.20px;top:284.20px;width:38.80px;height:18.72px">60.7</div>
<div class="cv" style="left:407.00px;top:284.20px;width:40.00px;height:18.72px">60.7</div>
<div class="cv" style="left:447.00px;top:284.20px;width:39.00px;height:18.72px">62.5</div>
<div class="cv" style="left:486.00px;top:284.20px;width:39.60px;height:18.72px">64.3</div>
<div class="cv" style="left:525.60px;top:284.20px;width:39.00px;height:18.72px">65.8</div>
<div class="cv" style="left:564.60px;top:284.20px;width:39.90px;height:18.72px">67.5</div>
<div class="cv" style="left:604.50px;top:284.20px;width:39.20px;height:18.72px">68.1</div>
<div class="cv" style="left:643.70px;top:284.20px;width:39.30px;height:18.72px">68.7</div>
<div class="cv" style="left:683.00px;top:284.20px;width:38.20px;height:18.72px">70.4</div>
<div class="cv" style="left:88.00px;top:302.92px;width:40.20px;height:18.72px">57.6</div>
<div class="cv" style="left:128.20px;top:302.92px;width:40.00px;height:18.72px">58.2</div>
<div class="cv" style="left:168.20px;top:302.92px;width:40.00px;height:18.72px">56.7</div>
<div class="cv" style="left:208.20px;top:302.92px;width:39.80px;height:18.72px">56.4</div>
<div class="cv" style="left:248.00px;top:302.92px;width:40.20px;height:18.72px">59.7</div>
<div class="cv" style="left:288.20px;top:302.92px;width:40.00px;height:18.72px">63.7</div>
<div class="cv" style="left:328.20px;top:302.92px;width:40.00px;height:18.72px">54.0</div>
<div class="cv" style="left:368.20px;top:302.92px;width:38.80px;height:18.72px">52.9</div>
<div class="cv" style="left:407.00px;top:302.92px;width:40.00px;height:18.72px">51.2</div>
<div class="cv" style="left:447.00px;top:302.92px;width:39.00px;height:18.72px">56.6</div>
<div class="cv" style="left:486.00px;top:302.92px;width:39.60px;height:18.72px">61.6</div>
<div class="cv" style="left:525.60px;top:302.92px;width:39.00px;height:18.72px">63.4</div>
<div class="cv" style="left:564.60px;top:302.92px;width:39.90px;height:18.72px">64.8</div>
<div class="cv" style="left:604.50px;top:302.92px;width:39.20px;height:18.72px">63.7</div>
<div class="cv" style="left:643.70px;top:302.92px;width:39.30px;height:18.72px">67.6</div>
<div class="cv" style="left:683.00px;top:302.92px;width:38.20px;height:18.72px">69.5</div>
<div class="cv" style="left:88.00px;top:321.64px;width:40.20px;height:18.72px">51.1</div>
<div class="cv" style="left:128.20px;top:321.64px;width:40.00px;height:18.72px">52.0</div>
<div class="cv" style="left:168.20px;top:321.64px;width:40.00px;height:18.72px">53.2</div>
<div class="cv" style="left:208.20px;top:321.64px;width:39.80px;height:18.72px">53.9</div>
<div class="cv" style="left:248.00px;top:321.64px;width:40.20px;height:18.72px">52.5</div>
<div class="cv" style="left:288.20px;top:321.64px;width:40.00px;height:18.72px">55.8</div>
<div class="cv" style="left:328.20px;top:321.64px;width:40.00px;height:18.72px">49.0</div>
<div class="cv" style="left:368.20px;top:321.64px;width:38.80px;height:18.72px">45.8</div>
<div class="cv" style="left:407.00px;top:321.64px;width:40.00px;height:18.72px">49.4</div>
<div class="cv" style="left:447.00px;top:321.64px;width:39.00px;height:18.72px">51.1</div>
<div class="cv" style="left:486.00px;top:321.64px;width:39.60px;height:18.72px">55.4</div>
<div class="cv" style="left:525.60px;top:321.64px;width:39.00px;height:18.72px">58.3</div>
<div class="cv" style="left:564.60px;top:321.64px;width:39.90px;height:18.72px">59.8</div>
<div class="cv" style="left:604.50px;top:321.64px;width:39.20px;height:18.72px">60.3</div>
<div class="cv" style="left:643.70px;top:321.64px;width:39.30px;height:18.72px">65.6</div>
<div class="cv" style="left:683.00px;top:321.64px;width:38.20px;height:18.72px">67.7</div>
<div class="cv" style="left:88.00px;top:340.36px;width:40.20px;height:18.72px">44.0</div>
<div class="cv" style="left:128.20px;top:340.36px;width:40.00px;height:18.72px">45.0</div>
<div class="cv" style="left:168.20px;top:340.36px;width:40.00px;height:18.72px">47.8</div>
<div class="cv" style="left:208.20px;top:340.36px;width:39.80px;height:18.72px">48.2</div>
<div class="cv" style="left:248.00px;top:340.36px;width:40.20px;height:18.72px">43.8</div>
<div class="cv" style="left:288.20px;top:340.36px;width:40.00px;height:18.72px">45.4</div>
<div class="cv" style="left:328.20px;top:340.36px;width:40.00px;height:18.72px">41.4</div>
<div class="cv" style="left:368.20px;top:340.36px;width:38.80px;height:18.72px">42.1</div>
<div class="cv" style="left:407.00px;top:340.36px;width:40.00px;height:18.72px">44.3</div>
<div class="cv" style="left:447.00px;top:340.36px;width:39.00px;height:18.72px">50.1</div>
<div class="cv" style="left:486.00px;top:340.36px;width:39.60px;height:18.72px">47.4</div>
<div class="cv" style="left:525.60px;top:340.36px;width:39.00px;height:18.72px">53.6</div>
<div class="cv" style="left:564.60px;top:340.36px;width:39.90px;height:18.72px">49.1</div>
<div class="cv" style="left:604.50px;top:340.36px;width:39.20px;height:18.72px">63.1</div>
<div class="cv" style="left:643.70px;top:340.36px;width:39.30px;height:18.72px">68.2</div>
<div class="cv" style="left:683.00px;top:340.36px;width:38.20px;height:18.72px">70.2</div>
<div class="cv red" style="left:88.00px;top:359.08px;width:40.20px;height:18.72px">36.3</div>
<div class="cv red" style="left:128.20px;top:359.08px;width:40.00px;height:18.72px">36.0</div>
<div class="cv red" style="left:168.20px;top:359.08px;width:40.00px;height:18.72px">32.0</div>
<div class="cv red" style="left:208.20px;top:359.08px;width:39.80px;height:18.72px">34.4</div>
<div class="cv red" style="left:248.00px;top:359.08px;width:40.20px;height:18.72px">35.8</div>
<div class="cv red" style="left:288.20px;top:359.08px;width:40.00px;height:18.72px">36.0</div>
<div class="cv red" style="left:328.20px;top:359.08px;width:40.00px;height:18.72px">36.8</div>
<div class="cv red" style="left:368.20px;top:359.08px;width:38.80px;height:18.72px">38.0</div>
<div class="cv red" style="left:407.00px;top:359.08px;width:40.00px;height:18.72px">37.0</div>
<div class="cv red" style="left:447.00px;top:359.08px;width:39.00px;height:18.72px">33.1</div>
<div class="cv blue" style="left:486.00px;top:359.08px;width:39.60px;height:18.72px">35.0</div>
<div class="cv" style="left:525.60px;top:359.08px;width:39.00px;height:18.72px">34.0</div>
<div class="cv blue" style="left:564.60px;top:359.08px;width:39.90px;height:18.72px">30.1</div>
<div class="cv" style="left:604.50px;top:359.08px;width:39.20px;height:18.72px">40.0</div>
<div class="cv" style="left:643.70px;top:359.08px;width:39.30px;height:18.72px">26.2</div>
<div class="cv" style="left:683.00px;top:359.08px;width:38.20px;height:18.72px">25.2</div>
<div class="cv" style="left:88.00px;top:377.80px;width:40.20px;height:18.72px">36.3</div>
<div class="cv" style="left:128.20px;top:377.80px;width:40.00px;height:18.72px">36.0</div>
<div class="cv" style="left:168.20px;top:377.80px;width:40.00px;height:18.72px">32.0</div>
<div class="cv" style="left:208.20px;top:377.80px;width:39.80px;height:18.72px">34.4</div>
<div class="cv" style="left:248.00px;top:377.80px;width:40.20px;height:18.72px">35.8</div>
<div class="cv" style="left:288.20px;top:377.80px;width:40.00px;height:18.72px">36.0</div>
<div class="cv" style="left:328.20px;top:377.80px;width:40.00px;height:18.72px">36.8</div>
<div class="cv" style="left:368.20px;top:377.80px;width:38.80px;height:18.72px">38.0</div>
<div class="cv" style="left:407.00px;top:377.80px;width:40.00px;height:18.72px">37.0</div>
<div class="cv" style="left:447.00px;top:377.80px;width:39.00px;height:18.72px">33.1</div>
<div class="cv" style="left:486.00px;top:377.80px;width:39.60px;height:18.72px">35.0</div>
<div class="cv" style="left:525.60px;top:377.80px;width:39.00px;height:18.72px">34.0</div>
<div class="cv" style="left:564.60px;top:377.80px;width:39.90px;height:18.72px">30.1</div>
<div class="cv" style="left:604.50px;top:377.80px;width:39.20px;height:18.72px">40.0</div>
<div class="cv" style="left:643.70px;top:377.80px;width:39.30px;height:18.72px">26.2</div>
<div class="cv" style="left:683.00px;top:377.80px;width:38.20px;height:18.72px">25.2</div>
<div class="xbin" style="left:88.00px;top:395.70000000000005px;width:40.80px;height:35px">700</div>
<div class="xlab" style="border-left-color:transparent;left:88.00px;top:431.5px;width:40.20px;height:19px">700</div>
<div class="xbin" style="left:128.20px;top:395.70000000000005px;width:40.60px;height:35px">947</div>
<div class="xlab" style="left:128.20px;top:431.5px;width:40.00px;height:19px">947</div>
<div class="xbin" style="left:168.20px;top:395.70000000000005px;width:40.60px;height:35px">1393</div>
<div class="xlab" style="left:168.20px;top:431.5px;width:40.00px;height:19px">1393</div>
<div class="xbin" style="left:208.20px;top:395.70000000000005px;width:40.40px;height:35px">1840</div>
<div class="xlab" style="left:208.20px;top:431.5px;width:39.80px;height:19px">1840</div>
<div class="xbin" style="left:248.00px;top:395.70000000000005px;width:40.80px;height:35px">2287</div>
<div class="xlab" style="left:248.00px;top:431.5px;width:40.20px;height:19px">2287</div>
<div class="xbin" style="left:288.20px;top:395.70000000000005px;width:40.60px;height:35px">2733</div>
<div class="xlab" style="left:288.20px;top:431.5px;width:40.00px;height:19px">2733</div>
<div class="xbin" style="left:328.20px;top:395.70000000000005px;width:40.60px;height:35px">3180</div>
<div class="xlab" style="left:328.20px;top:431.5px;width:40.00px;height:19px">3180</div>
<div class="xbin" style="left:368.20px;top:395.70000000000005px;width:39.40px;height:35px">3627</div>
<div class="xlab" style="left:368.20px;top:431.5px;width:38.80px;height:19px">3627</div>
<div class="xbin" style="left:407.00px;top:395.70000000000005px;width:40.60px;height:35px">4073</div>
<div class="xlab" style="left:407.00px;top:431.5px;width:40.00px;height:19px">4073</div>
<div class="xbin" style="left:447.00px;top:395.70000000000005px;width:39.60px;height:35px">4520</div>
<div class="xlab" style="left:447.00px;top:431.5px;width:39.00px;height:19px">4520</div>
<div class="xbin" style="left:486.00px;top:395.70000000000005px;width:40.20px;height:35px">4967</div>
<div class="xlab" style="left:486.00px;top:431.5px;width:39.60px;height:19px">4967</div>
<div class="xbin" style="left:525.60px;top:395.70000000000005px;width:39.60px;height:35px">5413</div>
<div class="xlab" style="left:525.60px;top:431.5px;width:39.00px;height:19px">5413</div>
<div class="xbin" style="left:564.60px;top:395.70000000000005px;width:40.50px;height:35px">5860</div>
<div class="xlab" style="left:564.60px;top:431.5px;width:39.90px;height:19px">5860</div>
<div class="xbin" style="left:604.50px;top:395.70000000000005px;width:39.80px;height:35px">6307</div>
<div class="xlab" style="left:604.50px;top:431.5px;width:39.20px;height:19px">6307</div>
<div class="xbin" style="left:643.70px;top:395.70000000000005px;width:39.90px;height:35px">6753</div>
<div class="xlab" style="left:643.70px;top:431.5px;width:39.30px;height:19px">6753</div>
<div class="xbin" style="left:683.00px;top:395.70000000000005px;width:38.80px;height:35px">7200</div>
<div class="xlab" style="border-right:1px solid #4a4a4a;left:683.00px;top:431.5px;width:38.20px;height:19px">7200</div>
<div class="abtn dis" style="left:48.5px;top:395.5px;width:37.5px;height:34.3px"><svg viewBox="0 0 30 24" width="25.5" height="20.4"><path d="M9 6V18H24" stroke="#777" stroke-width="3" fill="none"/><path d="M3.5 9L9 1.5L14.5 9Z M20 12.5L27 18L20 23.5Z" fill="#777"/></svg></div>
<div class="btn" style="left:189.5px;top:458.4px;width:236px;height:27.7px"></div>
<div class="t" style="left:206.20px;top:464.47px;font-size:14.3px;line-height:17.16px;color:#ffffff;transform:scaleX(1.0496);">Apply New X&amp;Y, Z Unchanged</div>
<div class="btn" style="left:434px;top:458.4px;width:281.3px;height:27.7px"></div>
<div class="t" style="left:451.80px;top:464.47px;font-size:14.3px;line-height:17.16px;color:#ffffff;transform:scaleX(1.0526);">Apply New X&amp;Y values, Interpolate Z</div>
<div class="btn" style="left:648.8px;top:504.5px;width:71px;height:28px"></div>
</div>
</body></html>
